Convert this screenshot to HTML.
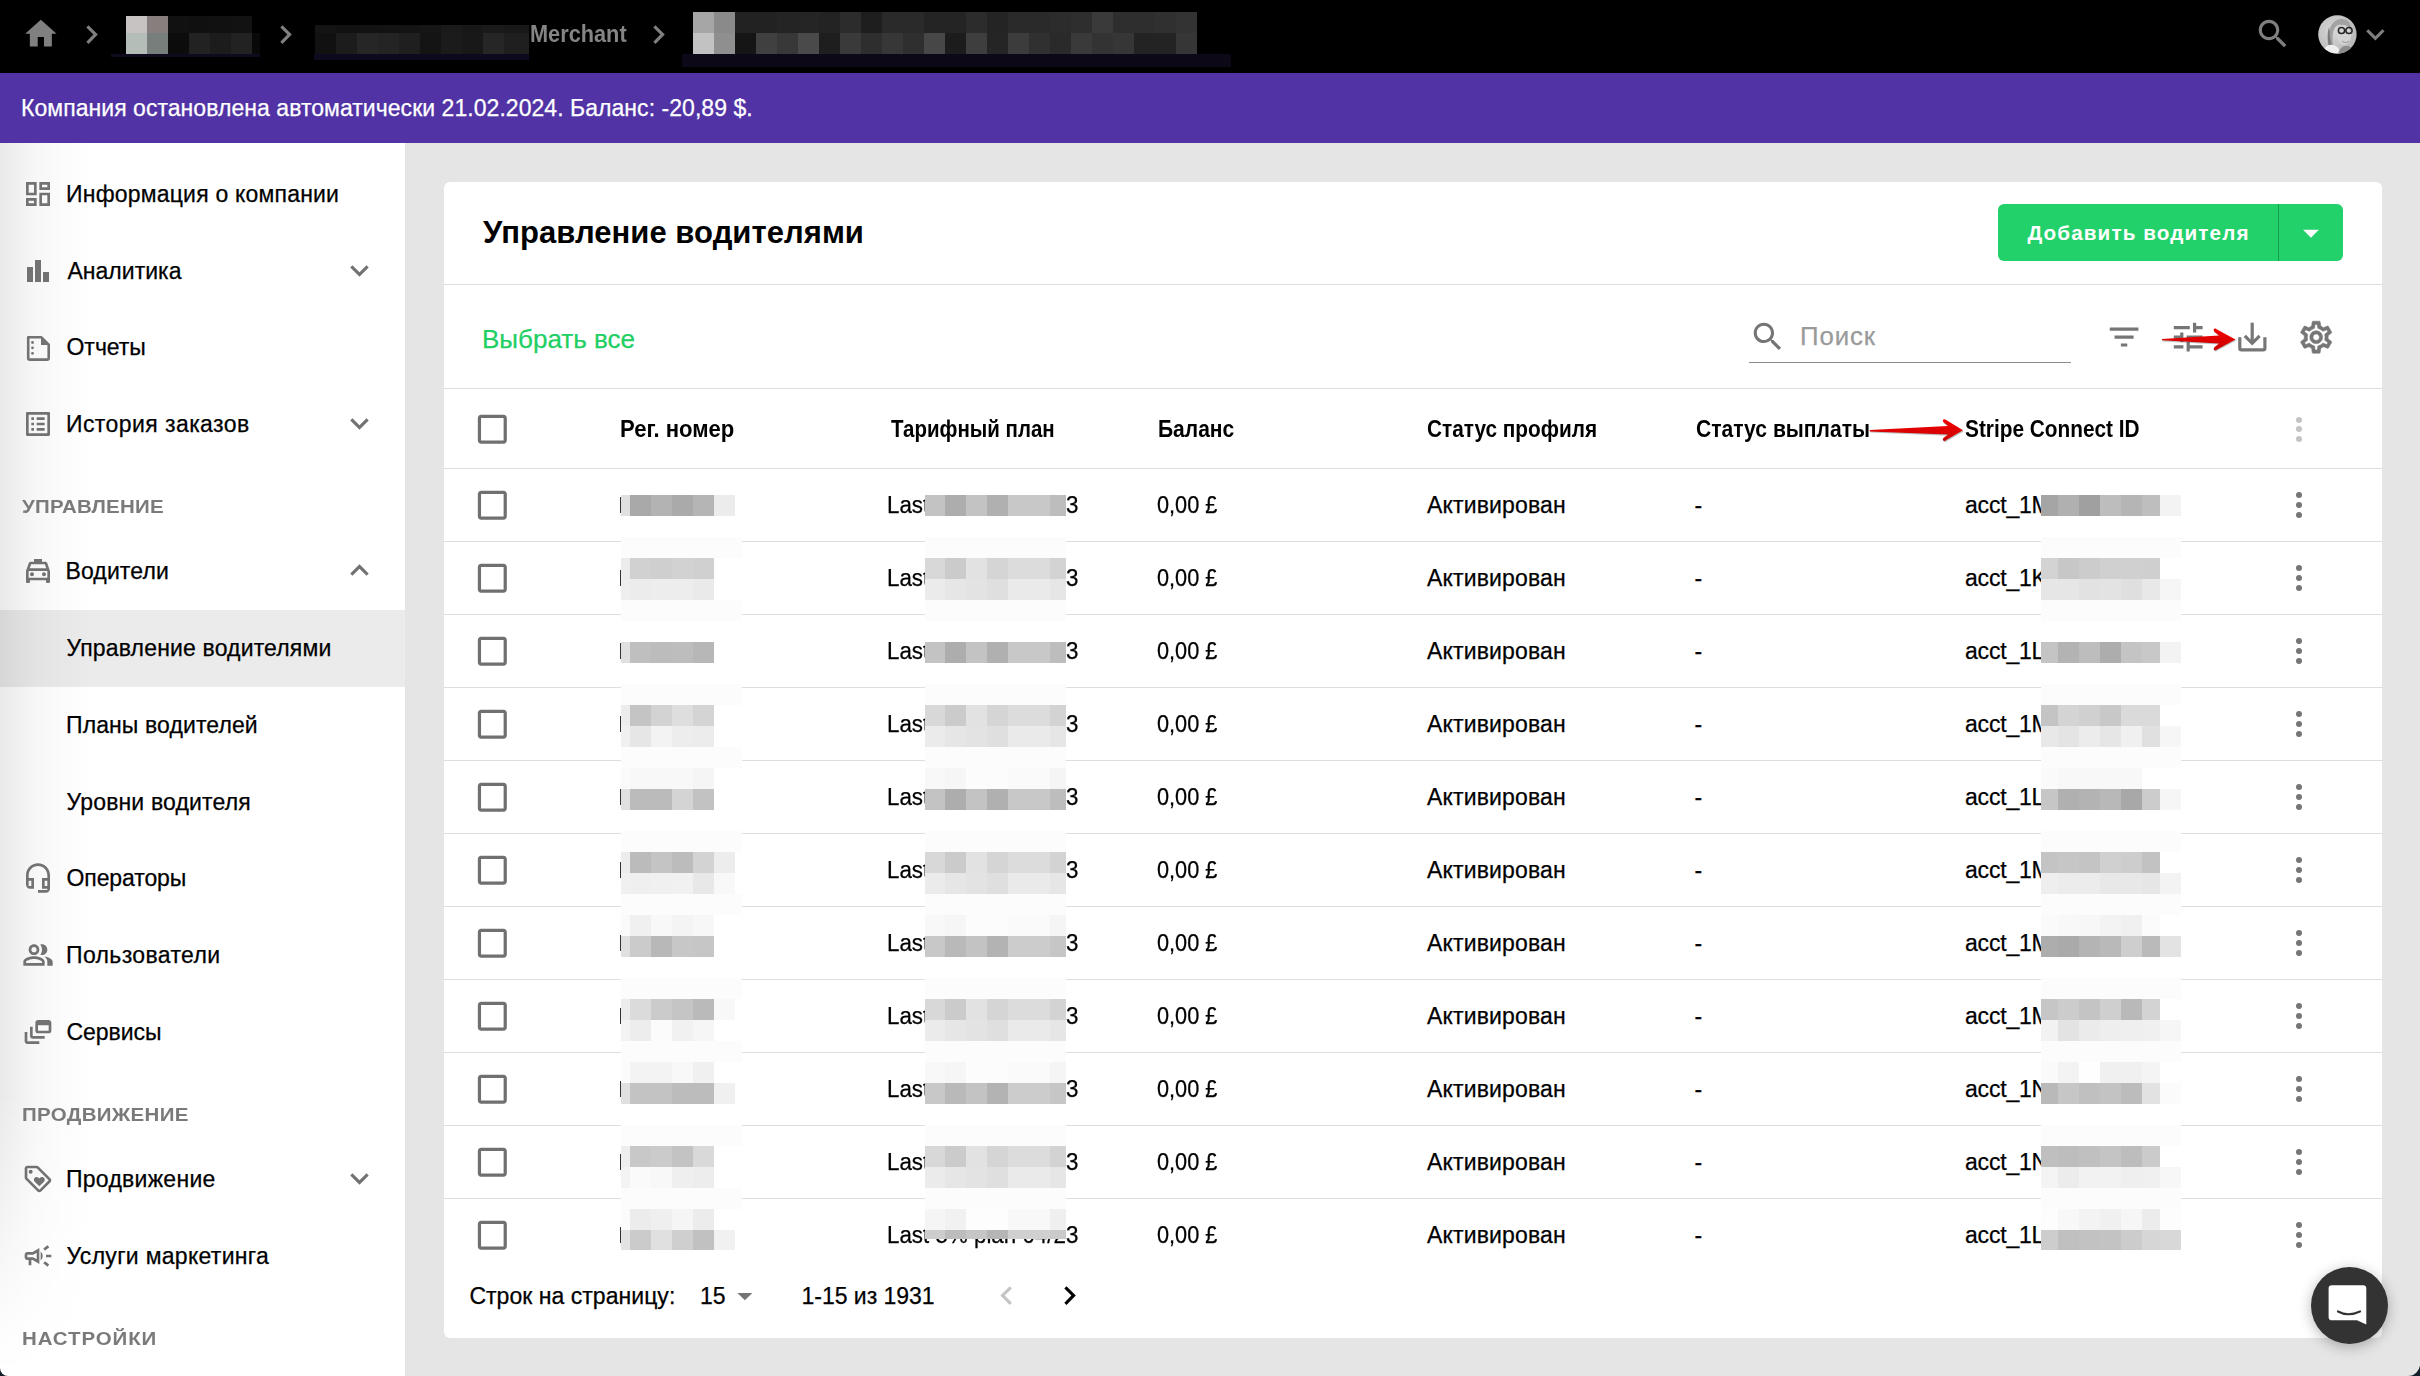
<!DOCTYPE html><html><head><meta charset="utf-8"><style>html,body{margin:0;padding:0;}body{width:2420px;height:1376px;overflow:hidden;position:relative;background:#e5e5e5;font-family:"Liberation Sans",sans-serif;}.t{position:absolute;white-space:pre;font-family:"Liberation Sans",sans-serif;}svg{display:block}</style></head><body>
<div style="position:absolute;left:0px;top:0px;width:2420px;height:73px;background:#000;"></div>
<svg style="position:absolute;left:22.3px;top:15.1px;" width="37.7" height="37.7" viewBox="0 0 24 24"><path fill="#808080" d="M10 20v-6h4v6h5v-8h3L12 3 2 12h3v8z"/></svg>
<svg style="position:absolute;left:73.4855px;top:15.5px;" width="37.2" height="37.2" viewBox="0 0 24 24"><path fill="#808080" d="M10 6L8.59 7.41 13.17 12l-4.58 4.59L10 18l6-6z"/></svg>
<svg style="position:absolute;left:267.3855px;top:15.5px;" width="37.2" height="37.2" viewBox="0 0 24 24"><path fill="#808080" d="M10 6L8.59 7.41 13.17 12l-4.58 4.59L10 18l6-6z"/></svg>
<svg style="position:absolute;left:640.4855px;top:15.5px;" width="37.2" height="37.2" viewBox="0 0 24 24"><path fill="#808080" d="M10 6L8.59 7.41 13.17 12l-4.58 4.59L10 18l6-6z"/></svg>
<div style="position:absolute;left:111px;top:54px;width:149px;height:3px;background:#0f0a1e;"></div>
<div style="position:absolute;left:126px;top:16px;width:21px;height:17px;background:#c8c3c3;"></div>
<div style="position:absolute;left:147px;top:16px;width:21px;height:17px;background:#877f7e;"></div>
<div style="position:absolute;left:168px;top:16px;width:21px;height:17px;background:#111111;"></div>
<div style="position:absolute;left:189px;top:16px;width:21px;height:17px;background:#101010;"></div>
<div style="position:absolute;left:210px;top:16px;width:21px;height:17px;background:#111111;"></div>
<div style="position:absolute;left:231px;top:16px;width:21px;height:17px;background:#121212;"></div>
<div style="position:absolute;left:126px;top:33px;width:21px;height:21px;background:#b5bdb9;"></div>
<div style="position:absolute;left:147px;top:33px;width:21px;height:21px;background:#787e7c;"></div>
<div style="position:absolute;left:168px;top:33px;width:21px;height:21px;background:#0c0c0c;"></div>
<div style="position:absolute;left:189px;top:33px;width:21px;height:21px;background:#222222;"></div>
<div style="position:absolute;left:210px;top:33px;width:21px;height:21px;background:#1c1c1c;"></div>
<div style="position:absolute;left:231px;top:33px;width:21px;height:21px;background:#222222;"></div>
<div style="position:absolute;left:252px;top:33px;width:8px;height:21px;background:#090909;"></div>
<div style="position:absolute;left:314px;top:54px;width:215px;height:6px;background:#0d0a1f;"></div>
<div style="position:absolute;left:315px;top:25px;width:21px;height:8px;background:#141414;"></div>
<div style="position:absolute;left:336px;top:25px;width:21px;height:8px;background:#111111;"></div>
<div style="position:absolute;left:357px;top:25px;width:21px;height:8px;background:#121212;"></div>
<div style="position:absolute;left:378px;top:25px;width:21px;height:8px;background:#131313;"></div>
<div style="position:absolute;left:399px;top:25px;width:21px;height:8px;background:#141414;"></div>
<div style="position:absolute;left:420px;top:25px;width:21px;height:8px;background:#161616;"></div>
<div style="position:absolute;left:441px;top:25px;width:21px;height:8px;background:#1a1a1a;"></div>
<div style="position:absolute;left:462px;top:25px;width:21px;height:8px;background:#171717;"></div>
<div style="position:absolute;left:483px;top:25px;width:21px;height:8px;background:#1a1a1a;"></div>
<div style="position:absolute;left:504px;top:25px;width:25px;height:8px;background:#181818;"></div>
<div style="position:absolute;left:315px;top:33px;width:21px;height:21px;background:#111111;"></div>
<div style="position:absolute;left:336px;top:33px;width:21px;height:21px;background:#1c1c1c;"></div>
<div style="position:absolute;left:357px;top:33px;width:21px;height:21px;background:#262626;"></div>
<div style="position:absolute;left:378px;top:33px;width:21px;height:21px;background:#242424;"></div>
<div style="position:absolute;left:399px;top:33px;width:21px;height:21px;background:#1f1f1f;"></div>
<div style="position:absolute;left:420px;top:33px;width:21px;height:21px;background:#141414;"></div>
<div style="position:absolute;left:441px;top:33px;width:21px;height:21px;background:#1b1b1b;"></div>
<div style="position:absolute;left:462px;top:33px;width:21px;height:21px;background:#181818;"></div>
<div style="position:absolute;left:483px;top:33px;width:21px;height:21px;background:#262626;"></div>
<div style="position:absolute;left:504px;top:33px;width:25px;height:21px;background:#1f1f1f;"></div>
<div class="t" style="left:530.26px;top:23.16px;font-size:23.2px;line-height:23.2px;font-weight:700;color:#858585;transform:scaleX(0.9373);transform-origin:0 0;">Merchant</div>
<div style="position:absolute;left:682px;top:54px;width:549px;height:13px;background:#0c0818;"></div>
<div style="position:absolute;left:693px;top:12px;width:21px;height:21px;background:#a6a6a6;"></div>
<div style="position:absolute;left:714px;top:12px;width:21px;height:21px;background:#8a8a8a;"></div>
<div style="position:absolute;left:735px;top:12px;width:21px;height:21px;background:#222222;"></div>
<div style="position:absolute;left:756px;top:12px;width:21px;height:21px;background:#222222;"></div>
<div style="position:absolute;left:777px;top:12px;width:21px;height:21px;background:#242424;"></div>
<div style="position:absolute;left:798px;top:12px;width:21px;height:21px;background:#252525;"></div>
<div style="position:absolute;left:819px;top:12px;width:21px;height:21px;background:#232323;"></div>
<div style="position:absolute;left:840px;top:12px;width:21px;height:21px;background:#2c2c2c;"></div>
<div style="position:absolute;left:861px;top:12px;width:21px;height:21px;background:#1e1e1e;"></div>
<div style="position:absolute;left:882px;top:12px;width:21px;height:21px;background:#2a2a2a;"></div>
<div style="position:absolute;left:903px;top:12px;width:21px;height:21px;background:#2a2a2a;"></div>
<div style="position:absolute;left:924px;top:12px;width:21px;height:21px;background:#242424;"></div>
<div style="position:absolute;left:945px;top:12px;width:21px;height:21px;background:#242424;"></div>
<div style="position:absolute;left:966px;top:12px;width:21px;height:21px;background:#2c2c2c;"></div>
<div style="position:absolute;left:987px;top:12px;width:21px;height:21px;background:#242424;"></div>
<div style="position:absolute;left:1008px;top:12px;width:21px;height:21px;background:#2a2a2a;"></div>
<div style="position:absolute;left:1029px;top:12px;width:21px;height:21px;background:#2a2a2a;"></div>
<div style="position:absolute;left:1050px;top:12px;width:21px;height:21px;background:#2c2c2c;"></div>
<div style="position:absolute;left:1071px;top:12px;width:21px;height:21px;background:#2e2e2e;"></div>
<div style="position:absolute;left:1092px;top:12px;width:21px;height:21px;background:#3a3a3a;"></div>
<div style="position:absolute;left:1113px;top:12px;width:21px;height:21px;background:#2e2e2e;"></div>
<div style="position:absolute;left:1134px;top:12px;width:21px;height:21px;background:#2e2e2e;"></div>
<div style="position:absolute;left:1155px;top:12px;width:21px;height:21px;background:#303030;"></div>
<div style="position:absolute;left:1176px;top:12px;width:21px;height:21px;background:#333333;"></div>
<div style="position:absolute;left:693px;top:33px;width:21px;height:21px;background:#c2c2c2;"></div>
<div style="position:absolute;left:714px;top:33px;width:21px;height:21px;background:#8f8f8f;"></div>
<div style="position:absolute;left:735px;top:33px;width:21px;height:21px;background:#151515;"></div>
<div style="position:absolute;left:756px;top:33px;width:21px;height:21px;background:#404040;"></div>
<div style="position:absolute;left:777px;top:33px;width:21px;height:21px;background:#383838;"></div>
<div style="position:absolute;left:798px;top:33px;width:21px;height:21px;background:#4a4a4a;"></div>
<div style="position:absolute;left:819px;top:33px;width:21px;height:21px;background:#1e1e1e;"></div>
<div style="position:absolute;left:840px;top:33px;width:21px;height:21px;background:#3a3a3a;"></div>
<div style="position:absolute;left:861px;top:33px;width:21px;height:21px;background:#2e2e2e;"></div>
<div style="position:absolute;left:882px;top:33px;width:21px;height:21px;background:#373737;"></div>
<div style="position:absolute;left:903px;top:33px;width:21px;height:21px;background:#2f2f2f;"></div>
<div style="position:absolute;left:924px;top:33px;width:21px;height:21px;background:#474747;"></div>
<div style="position:absolute;left:945px;top:33px;width:21px;height:21px;background:#1c1c1c;"></div>
<div style="position:absolute;left:966px;top:33px;width:21px;height:21px;background:#3e3e3e;"></div>
<div style="position:absolute;left:987px;top:33px;width:21px;height:21px;background:#252525;"></div>
<div style="position:absolute;left:1008px;top:33px;width:21px;height:21px;background:#3c3c3c;"></div>
<div style="position:absolute;left:1029px;top:33px;width:21px;height:21px;background:#303030;"></div>
<div style="position:absolute;left:1050px;top:33px;width:21px;height:21px;background:#2a2a2a;"></div>
<div style="position:absolute;left:1071px;top:33px;width:21px;height:21px;background:#3a3a3a;"></div>
<div style="position:absolute;left:1092px;top:33px;width:21px;height:21px;background:#333333;"></div>
<div style="position:absolute;left:1113px;top:33px;width:21px;height:21px;background:#363636;"></div>
<div style="position:absolute;left:1134px;top:33px;width:21px;height:21px;background:#232323;"></div>
<div style="position:absolute;left:1155px;top:33px;width:21px;height:21px;background:#232323;"></div>
<div style="position:absolute;left:1176px;top:33px;width:21px;height:21px;background:#363636;"></div>
<svg style="position:absolute;left:2254.2px;top:15.06px;" width="37.9" height="37.9" viewBox="0 0 24 24"><path fill="#808080" d="M15.5 14h-.79l-.28-.27C15.41 12.59 16 11.11 16 9.5 16 5.91 13.09 3 9.5 3S3 5.91 3 9.5 5.91 16 9.5 16c1.61 0 3.09-.59 4.23-1.57l.27.28v.79l5 4.99L20.49 19l-4.99-5zm-6 0C7.01 14 5 11.99 5 9.5S7.01 5 9.5 5 14 7.01 14 9.5 11.99 14 9.5 14z"/></svg>
<svg style="position:absolute;left:2318px;top:15px" width="39" height="39" viewBox="0 0 39 39"><defs><clipPath id="av"><circle cx="19.4" cy="19.4" r="19.2"/></clipPath><radialGradient id="avg" cx="0.4" cy="0.4" r="0.7"><stop offset="0" stop-color="#d8d8d8"/><stop offset="1" stop-color="#b4b4b4"/></radialGradient></defs><g clip-path="url(#av)"><rect width="39" height="39" fill="url(#avg)"/><path d="M10 30 C9 18 12 6 22 4 C30 3 34 9 33 16 C30 10 24 9 20 10 C15 12 14 20 15 30 Z" fill="#a2a2a2"/><path d="M11 12 C12 20 12 26 15 34 L13 36 C9 28 9 18 11 12 Z" fill="#7a7a7a"/><ellipse cx="26" cy="20" rx="7" ry="10" fill="#d4d4d4"/><circle cx="23.5" cy="15.5" r="3.1" fill="none" stroke="#262626" stroke-width="1.5"/><circle cx="31" cy="15.5" r="3.1" fill="none" stroke="#262626" stroke-width="1.5"/><path d="M26.6 15 H28" stroke="#262626" stroke-width="1.2"/><path d="M24 26 C26 28 29 28 31 26" stroke="#8a8a8a" stroke-width="1" fill="none"/><path d="M4 39 C6 32 10 29 15 30 C20 31 22 35 22 39 Z" fill="#eeeeee"/><path d="M20 39 C22 33 25 30 30 31 C34 32 36 36 37 39 Z" fill="#8c8c8c"/></g></svg>
<svg style="position:absolute;left:2356.7px;top:15.8px;" width="36.72" height="36.72" viewBox="0 0 24 24"><path fill="#808080" d="M16.59 8.59L12 13.17 7.41 8.59 6 10l6 6 6-6z"/></svg>
<div style="position:absolute;left:0px;top:73px;width:2420px;height:70px;background:#5133a5;"></div>
<div class="t" style="left:21.00px;top:97.23px;font-size:23.0px;line-height:23.0px;font-weight:400;color:#fff;letter-spacing:0.048px;-webkit-text-stroke:0.25px #fff;">Компания остановлена автоматически 21.02.2024. Баланс: -20,89 $.</div>
<div style="position:absolute;left:0px;top:143px;width:405px;height:1233px;background:#fff;"></div>
<div style="position:absolute;left:0px;top:610px;width:405px;height:77px;background:#ebebeb;"></div>
<div style="position:absolute;left:0;top:143px;width:90px;height:1233px;background:linear-gradient(to right,rgba(0,0,0,0.085),rgba(0,0,0,0.03) 35px,rgba(0,0,0,0) 90px);-webkit-mask-image:linear-gradient(to bottom,#000 0,#000 950px,rgba(0,0,0,0.1) 1190px,rgba(0,0,0,0) 1233px)"></div>
<div style="position:absolute;left:0;top:1368px;width:8px;height:8px;background:#13202b;clip-path:path('M0 0 A8 8 0 0 0 8 8 H0 Z')"></div>
<svg style="position:absolute;left:22px;top:178px;" width="32" height="32" viewBox="0 0 24 24"><path fill="#727272" d="M19 5v2h-4V5h4M9 5v6H5V5h4m10 8v6h-4v-6h4M9 17v2H5v-2h4M21 3h-8v6h8V3zM11 3H3v10h8V3zm10 8h-8v10h8V11zm-10 4H3v6h8v-6z"/></svg>
<div style="position:absolute;left:27.2px;top:267.2px;width:5.5px;height:14.5px;background:#727272;"></div>
<div style="position:absolute;left:35.2px;top:260.2px;width:5.5px;height:21.5px;background:#727272;"></div>
<div style="position:absolute;left:43.1px;top:272.2px;width:5.5px;height:9.5px;background:#727272;"></div>
<svg style="position:absolute;left:18px;top:327px;" width="40" height="40" viewBox="0 0 40 40"><path fill="none" stroke="#727272" stroke-width="2.6" stroke-linejoin="round" d="M10.2 10.3 H23.4 L30.7 17.6 V31 q0 1.6-1.6 1.6 H11.8 q-1.6 0-1.6-1.6 Z"/><path fill="#727272" d="M23 9.2 L31.9 18.1 H23 Z"/><circle cx="14.5" cy="15.5" r="1.4" fill="#727272"/><circle cx="14.5" cy="20.8" r="1.4" fill="#727272"/><circle cx="14.5" cy="26.3" r="1.4" fill="#727272"/></svg>
<svg style="position:absolute;left:22px;top:408px;" width="32" height="32" viewBox="0 0 24 24"><path fill="#727272" d="M19 5v14H5V5h14m1.1-2H3.9c-.5 0-.9.4-.9.9v16.2c0 .4.4.9.9.9h16.2c.4 0 .9-.5.9-.9V3.9c0-.5-.5-.9-.9-.9zM11 7h6v2h-6V7zm0 4h6v2h-6v-2zm0 4h6v2h-6zM7 7h2v2H7zm0 4h2v2H7zm0 4h2v2H7z"/></svg>
<svg style="position:absolute;left:22px;top:555px;" width="32" height="32" viewBox="0 0 24 24"><path fill="#727272" d="M18.92 6.01C18.72 5.42 18.16 5 17.5 5H15V3H9v2H6.5c-.66 0-1.21.42-1.42 1.01L3 12v8c0 .55.45 1 1 1h1c.55 0 1-.45 1-1v-1h12v1c0 .55.45 1 1 1h1c.55 0 1-.45 1-1v-8l-2.08-5.99zM6.85 7h10.29l1.04 3H5.81l1.04-3zM19 17H5v-5h14v5zM7.5 13a1.5 1.5 0 1 0 0 3 1.5 1.5 0 1 0 0-3zM16.5 13a1.5 1.5 0 1 0 0 3 1.5 1.5 0 1 0 0-3z"/></svg>
<svg style="position:absolute;left:22px;top:862px;" width="32" height="32" viewBox="0 0 24 24"><path fill="#727272" d="M19 14v4h-2v-4h2M7 14v4H5v-4h2m5-13c-4.97 0-9 4.03-9 9v7c0 1.66 1.34 3 3 3h3v-8H5v-2c0-3.87 3.13-7 7-7s7 3.13 7 7v2h-4v8h4v1h-7v2h6c1.66 0 3-1.34 3-3V10c0-4.97-4.03-9-9-9z"/></svg>
<svg style="position:absolute;left:22px;top:939px;" width="32" height="32" viewBox="0 0 24 24"><path fill="#727272" d="M16.67 13.13C18.04 14.06 19 15.32 19 17v3h4v-3c0-2.18-3.57-3.47-6.33-3.87zM15 12c2.21 0 4-1.79 4-4s-1.79-4-4-4c-.47 0-.91.1-1.33.24C14.5 5.27 15 6.58 15 8s-.5 2.73-1.33 3.76c.42.14.86.24 1.33.24zM9 12c2.21 0 4-1.79 4-4s-1.79-4-4-4-4 1.79-4 4 1.79 4 4 4zm0-6c1.1 0 2 .9 2 2s-.9 2-2 2-2-.9-2-2 .9-2 2-2zM9 13c-2.67 0-8 1.34-8 4v3h16v-3c0-2.66-5.33-4-8-4zm6 5H3v-.99C3.2 16.29 6.3 15 9 15s5.8 1.29 6 2v1z"/></svg>
<svg style="position:absolute;left:22px;top:1016px;" width="32" height="32" viewBox="0 0 24 24"><path fill="#727272" d="M8 8H6v7c0 1.1.9 2 2 2h9v-2H8V8zM20 3h-8c-1.1 0-2 .9-2 2v6c0 1.1.9 2 2 2h8c1.1 0 2-.9 2-2V5c0-1.1-.9-2-2-2zm0 8h-8V7h8v4zM4 12H2v7c0 1.1.9 2 2 2h9v-2H4v-7z"/></svg>
<svg style="position:absolute;left:22px;top:1163px;" width="32" height="32" viewBox="0 0 24 24"><path fill="#727272" d="M21.41 11.58l-9-9C12.05 2.22 11.55 2 11 2H4c-1.1 0-2 .9-2 2v7c0 .55.22 1.05.59 1.42l9 9c.36.36.86.58 1.41.58s1.05-.22 1.41-.59l7-7c.37-.36.59-.86.59-1.41s-.23-1.06-.59-1.42zM13 20.01L4 11V4h7v-.01l9 9-7 7.02zM6.5 5a1.5 1.5 0 1 0 0 3 1.5 1.5 0 1 0 0-3zM8.9 12.55c0 .57.23 1.07.6 1.45l3.5 3.5 3.5-3.5c.37-.37.6-.89.6-1.45 0-1.13-.92-2.05-2.05-2.05-.57 0-1.08.23-1.45.6l-.6.6-.6-.59c-.37-.38-.89-.61-1.45-.61-1.13 0-2.05.92-2.05 2.05z"/></svg>
<svg style="position:absolute;left:22px;top:1240px;" width="32" height="32" viewBox="0 0 24 24"><path fill="#727272" d="M18 11v2h4v-2h-4zm-2 6.61c.96.71 2.21 1.65 3.2 2.39.4-.53.8-1.07 1.2-1.6-.99-.74-2.24-1.68-3.2-2.4-.4.54-.8 1.08-1.2 1.61zM20.4 5.6c-.4-.53-.8-1.07-1.2-1.6-.99.74-2.24 1.68-3.2 2.4.4.53.8 1.07 1.2 1.6.96-.72 2.21-1.65 3.2-2.4zM4 9c-1.1 0-2 .9-2 2v2c0 1.1.9 2 2 2h1v4h2v-4h1l5 3V6L8 9H4zm5.03 1.71L11 9.53v4.94l-1.97-1.18-.48-.29H4v-2h4.55l.48-.29zM15.5 12c0-1.33-.58-2.53-1.5-3.35v6.69c.92-.81 1.5-2.01 1.5-3.34z"/></svg>
<svg style="position:absolute;left:341.46px;top:252.37140000000002px;" width="36.96" height="36.96" viewBox="0 0 24 24"><path fill="#727272" d="M16.59 8.59L12 13.17 7.41 8.59 6 10l6 6 6-6z"/></svg>
<svg style="position:absolute;left:341.46px;top:405.3714px;" width="36.96" height="36.96" viewBox="0 0 24 24"><path fill="#727272" d="M16.59 8.59L12 13.17 7.41 8.59 6 10l6 6 6-6z"/></svg>
<svg style="position:absolute;left:341.46px;top:1160.3714px;" width="36.96" height="36.96" viewBox="0 0 24 24"><path fill="#727272" d="M16.59 8.59L12 13.17 7.41 8.59 6 10l6 6 6-6z"/></svg>
<svg style="position:absolute;left:341.46px;top:551.68px;" width="36.96" height="36.96" viewBox="0 0 24 24"><path fill="#727272" d="M12 8l-6 6 1.41 1.41L12 10.83l4.59 4.58L18 14z"/></svg>
<div class="t" style="left:66.00px;top:183.23px;font-size:23.0px;line-height:23.0px;font-weight:400;color:#000;letter-spacing:0.2px;-webkit-text-stroke:0.25px #000;">Информация о компании</div>
<div class="t" style="left:67.50px;top:260.23px;font-size:23.0px;line-height:23.0px;font-weight:400;color:#000;letter-spacing:0.012px;-webkit-text-stroke:0.25px #000;">Аналитика</div>
<div class="t" style="left:66.50px;top:336.23px;font-size:23.0px;line-height:23.0px;font-weight:400;color:#000;letter-spacing:-0.02px;-webkit-text-stroke:0.25px #000;">Отчеты</div>
<div class="t" style="left:66.00px;top:413.23px;font-size:23.0px;line-height:23.0px;font-weight:400;color:#000;letter-spacing:0.421px;-webkit-text-stroke:0.25px #000;">История заказов</div>
<div class="t" style="left:65.50px;top:560.23px;font-size:23.0px;line-height:23.0px;font-weight:400;color:#000;letter-spacing:0.114px;-webkit-text-stroke:0.25px #000;">Водители</div>
<div class="t" style="left:66.50px;top:637.23px;font-size:23.0px;line-height:23.0px;font-weight:400;color:#000;letter-spacing:0.16px;-webkit-text-stroke:0.25px #000;">Управление водителями</div>
<div class="t" style="left:66.00px;top:714.23px;font-size:23.0px;line-height:23.0px;font-weight:400;color:#000;letter-spacing:0.1px;-webkit-text-stroke:0.25px #000;">Планы водителей</div>
<div class="t" style="left:66.50px;top:791.23px;font-size:23.0px;line-height:23.0px;font-weight:400;color:#000;letter-spacing:0.157px;-webkit-text-stroke:0.25px #000;">Уровни водителя</div>
<div class="t" style="left:66.50px;top:867.23px;font-size:23.0px;line-height:23.0px;font-weight:400;color:#000;letter-spacing:-0.1px;-webkit-text-stroke:0.25px #000;">Операторы</div>
<div class="t" style="left:66.00px;top:944.23px;font-size:23.0px;line-height:23.0px;font-weight:400;color:#000;letter-spacing:0.364px;-webkit-text-stroke:0.25px #000;">Пользователи</div>
<div class="t" style="left:66.50px;top:1021.23px;font-size:23.0px;line-height:23.0px;font-weight:400;color:#000;letter-spacing:-0.033px;-webkit-text-stroke:0.25px #000;">Сервисы</div>
<div class="t" style="left:66.00px;top:1168.23px;font-size:23.0px;line-height:23.0px;font-weight:400;color:#000;letter-spacing:0.27px;-webkit-text-stroke:0.25px #000;">Продвижение</div>
<div class="t" style="left:66.50px;top:1245.23px;font-size:23.0px;line-height:23.0px;font-weight:400;color:#000;letter-spacing:0.288px;-webkit-text-stroke:0.25px #000;">Услуги маркетинга</div>
<div class="t" style="left:21.60px;top:498.53px;font-size:17.8px;line-height:17.8px;font-weight:700;color:#7a7a7a;letter-spacing:0.208px;transform:scaleX(1.15);transform-origin:0 0;">УПРАВЛЕНИЕ</div>
<div class="t" style="left:21.55px;top:1106.53px;font-size:17.8px;line-height:17.8px;font-weight:700;color:#7a7a7a;letter-spacing:0.296px;transform:scaleX(1.15);transform-origin:0 0;">ПРОДВИЖЕНИЕ</div>
<div class="t" style="left:21.55px;top:1330.63px;font-size:17.8px;line-height:17.8px;font-weight:700;color:#7a7a7a;letter-spacing:0.793px;transform:scaleX(1.15);transform-origin:0 0;">НАСТРОЙКИ</div>
<div style="position:absolute;left:444px;top:182px;width:1938px;height:1156px;background:#fff;border-radius:6px"></div>
<div class="t" style="left:483.00px;top:217.46px;font-size:31px;line-height:31px;font-weight:700;color:#000;letter-spacing:0.05px;">Управление водителями</div>
<div style="position:absolute;left:1998px;top:204px;width:345px;height:57px;background:#23d16a;border-radius:6px"></div>
<div style="position:absolute;left:2277.5px;top:204px;width:1.2px;height:57px;background:#179c4c;"></div>
<div class="t" style="left:2027.50px;top:223.18px;font-size:20.7px;line-height:20.7px;font-weight:700;color:#fff;letter-spacing:1.094px;">Добавить водителя</div>
<svg style="position:absolute;left:2292.34px;top:213.89999999999998px;" width="37.92" height="37.92" viewBox="0 0 24 24"><path fill="#fff" d="M7 10l5 5 5-5z"/></svg>
<div style="position:absolute;left:444px;top:284px;width:1938px;height:1px;background:#dedede;"></div>
<div class="t" style="left:482.00px;top:325.69px;font-size:26px;line-height:26px;font-weight:400;color:#21cf63;letter-spacing:0.0px;-webkit-text-stroke:0.25px #21cf63;">Выбрать все</div>
<svg style="position:absolute;left:1749.3px;top:317.8px;" width="37.608" height="37.608" viewBox="0 0 24 24"><path fill="#757575" d="M15.5 14h-.79l-.28-.27C15.41 12.59 16 11.11 16 9.5 16 5.91 13.09 3 9.5 3S3 5.91 3 9.5 5.91 16 9.5 16c1.61 0 3.09-.59 4.23-1.57l.27.28v.79l5 4.99L20.49 19l-4.99-5zm-6 0C7.01 14 5 11.99 5 9.5S7.01 5 9.5 5 14 7.01 14 9.5 11.99 14 9.5 14z"/></svg>
<div class="t" style="left:1800.00px;top:324.46px;font-size:25.8px;line-height:25.8px;font-weight:400;color:#9a9a9a;letter-spacing:0.875px;-webkit-text-stroke:0.25px #9a9a9a;">Поиск</div>
<div style="position:absolute;left:1749px;top:361.5px;width:322px;height:1.6px;background:#8a8a8a;"></div>
<svg style="position:absolute;left:2105.23px;top:317.76px;" width="38.160000000000004" height="38.160000000000004" viewBox="0 0 24 24"><path fill="#767676" d="M10 18h4v-2h-4v2zM3 6v2h18V6H3zm3 7h12v-2H6v2z"/></svg>
<svg style="position:absolute;left:2169.2px;top:317.9px;" width="38.400000000000006" height="38.400000000000006" viewBox="0 0 24 24"><path fill="#767676" d="M3 17v2h6v-2H3zM3 5v2h10V5H3zm10 16v-2h8v-2h-8v-2h-2v6h2zM7 9v2H3v2h4v2h2V9H7zm14 4v-2H11v2h10zm-6-4h2V7h4V5h-4V3h-2v6z"/></svg>
<svg style="position:absolute;left:2230px;top:315px;" width="45" height="45" viewBox="2230 315 45 45"><g fill="none" stroke="#767676" stroke-width="3.2"><path d="M2239.8 337.2 V348.2 q0 1.6 1.6 1.6 H2263.3 q1.6 0 1.6 -1.6 V337.2"/><path d="M2252.2 322.7 V342"/><path d="M2244.8 335.9 L2252.2 343.3 L2259.6 335.9"/></g></svg>
<svg style="position:absolute;left:2297px;top:317.9px;" width="38.4" height="38.4" viewBox="0 0 24 24"><path fill="#767676" stroke="#767676" stroke-width="0.35" d="M19.43 12.98c.04-.32.07-.64.07-.98 0-.34-.03-.66-.07-.98l2.11-1.65c.19-.15.24-.42.12-.64l-2-3.46c-.09-.16-.26-.25-.44-.25-.06 0-.12.01-.17.03l-2.49 1c-.52-.4-1.08-.73-1.69-.98l-.38-2.65C14.46 2.18 14.25 2 14 2h-4c-.25 0-.46.18-.49.42l-.38 2.65c-.61.25-1.17.59-1.69.98l-2.49-1c-.06-.02-.12-.03-.18-.03-.17 0-.34.09-.43.25l-2 3.46c-.13.22-.07.49.12.64l2.11 1.65c-.04.32-.07.65-.07.98 0 .33.03.66.07.98l-2.11 1.65c-.19.15-.24.42-.12.64l2 3.46c.09.16.26.25.44.25.06 0 .12-.01.17-.03l2.49-1c.52.4 1.08.73 1.69.98l.38 2.65c.03.24.24.42.49.42h4c.25 0 .46-.18.49-.42l.38-2.65c.61-.25 1.17-.59 1.69-.98l2.49 1c.06.02.12.03.18.03.17 0 .34-.09.43-.25l2-3.46c.12-.22.07-.49-.12-.64l-2.11-1.65zm-1.98-1.71c.04.31.05.52.05.73 0 .21-.02.43-.05.73l-.14 1.13.89.7 1.08.84-.7 1.21-1.27-.51-1.04-.42-.9.68c-.43.32-.84.56-1.25.73l-1.06.43-.16 1.13-.2 1.35h-1.4l-.19-1.35-.16-1.13-1.06-.43c-.43-.18-.83-.41-1.23-.71l-.91-.7-1.06.43-1.27.51-.7-1.21 1.08-.84.89-.7-.14-1.13c-.03-.31-.05-.54-.05-.74s.02-.43.05-.73l.14-1.13-.89-.7-1.08-.84.7-1.21 1.27.51 1.04.42.9-.68c.43-.32.84-.56 1.25-.73l1.06-.43.16-1.13.2-1.35h1.39l.19 1.35.16 1.13 1.06.43c.43.18.83.41 1.23.71l.91.7 1.06-.43 1.27-.51.7 1.21-1.07.85-.89.7.14 1.13zM12 8c-2.21 0-4 1.79-4 4s1.79 4 4 4 4-1.79 4-4-1.79-4-4-4zm0 6c-1.1 0-2-.9-2-2s.9-2 2-2 2 .9 2 2-.9 2-2 2z"/></svg>
<div style="position:absolute;left:444px;top:388px;width:1938px;height:1px;background:#dedede;"></div>
<svg style="position:absolute;left:472.967px;top:409.967px;" width="38.664" height="38.664" viewBox="0 0 24 24"><path fill="#707070" d="M19 5v14H5V5h14m0-2H5c-1.11 0-2 .9-2 2v14c0 1.1.89 2 2 2h14c1.1 0 2-.9 2-2V5c0-1.1-.9-2-2-2z"/></svg>
<div class="t" style="left:619.75px;top:418.06px;font-size:23.2px;line-height:23.2px;font-weight:700;color:#000;transform:scaleX(0.9517);transform-origin:0 0;">Рег. номер</div>
<div class="t" style="left:890.50px;top:418.06px;font-size:23.2px;line-height:23.2px;font-weight:700;color:#000;transform:scaleX(0.8832);transform-origin:0 0;">Тарифный план</div>
<div class="t" style="left:1158.09px;top:418.06px;font-size:23.2px;line-height:23.2px;font-weight:700;color:#000;transform:scaleX(0.9061);transform-origin:0 0;">Баланс</div>
<div class="t" style="left:1427.10px;top:418.06px;font-size:23.2px;line-height:23.2px;font-weight:700;color:#000;transform:scaleX(0.8963);transform-origin:0 0;">Статус профиля</div>
<div class="t" style="left:1696.29px;top:418.06px;font-size:23.2px;line-height:23.2px;font-weight:700;color:#000;transform:scaleX(0.9090);transform-origin:0 0;">Статус выплаты</div>
<div class="t" style="left:1965.40px;top:418.06px;font-size:23.2px;line-height:23.2px;font-weight:700;color:#000;transform:scaleX(0.8974);transform-origin:0 0;">Stripe Connect ID</div>
<div style="position:absolute;left:2296px;top:416.5px;width:6px;height:6px;border-radius:3px;background:#c4c4c4"></div>
<div style="position:absolute;left:2296px;top:426.2px;width:6px;height:6px;border-radius:3px;background:#c4c4c4"></div>
<div style="position:absolute;left:2296px;top:435.8px;width:6px;height:6px;border-radius:3px;background:#c4c4c4"></div>
<div style="position:absolute;left:444px;top:468px;width:1938px;height:1px;background:#dedede;"></div>
<div style="position:absolute;left:444px;top:541px;width:1938px;height:1px;background:#dedede;"></div>
<div style="position:absolute;left:444px;top:614px;width:1938px;height:1px;background:#dedede;"></div>
<div style="position:absolute;left:444px;top:687px;width:1938px;height:1px;background:#dedede;"></div>
<div style="position:absolute;left:444px;top:760px;width:1938px;height:1px;background:#dedede;"></div>
<div style="position:absolute;left:444px;top:833px;width:1938px;height:1px;background:#dedede;"></div>
<div style="position:absolute;left:444px;top:906px;width:1938px;height:1px;background:#dedede;"></div>
<div style="position:absolute;left:444px;top:979px;width:1938px;height:1px;background:#dedede;"></div>
<div style="position:absolute;left:444px;top:1052px;width:1938px;height:1px;background:#dedede;"></div>
<div style="position:absolute;left:444px;top:1125px;width:1938px;height:1px;background:#dedede;"></div>
<div style="position:absolute;left:444px;top:1198px;width:1938px;height:1px;background:#dedede;"></div>
<svg style="position:absolute;left:472.967px;top:485.86699999999996px;" width="38.664" height="38.664" viewBox="0 0 24 24"><path fill="#707070" d="M19 5v14H5V5h14m0-2H5c-1.11 0-2 .9-2 2v14c0 1.1.89 2 2 2h14c1.1 0 2-.9 2-2V5c0-1.1-.9-2-2-2z"/></svg>
<div style="position:absolute;left:619.5px;top:497px;width:1.8px;height:16px;background:#333;"></div>
<div class="t" style="left:887.06px;top:494.23px;font-size:23.0px;line-height:23.0px;font-weight:400;color:#000;transform:scaleX(0.9716);transform-origin:0 0;-webkit-text-stroke:0.25px #000;">Last 5% plan 04/23</div>
<div class="t" style="left:1157.06px;top:494.23px;font-size:23.0px;line-height:23.0px;font-weight:400;color:#000;transform:scaleX(0.9444);transform-origin:0 0;-webkit-text-stroke:0.25px #000;">0,00 £</div>
<div class="t" style="left:1427.00px;top:494.23px;font-size:23.0px;line-height:23.0px;font-weight:400;color:#000;letter-spacing:0.15px;-webkit-text-stroke:0.25px #000;">Активирован</div>
<div class="t" style="left:1694.40px;top:494.23px;font-size:23.0px;line-height:23.0px;font-weight:400;color:#000;letter-spacing:0px;-webkit-text-stroke:0.25px #000;">-</div>
<div class="t" style="left:1965.00px;top:494.23px;font-size:23.0px;line-height:23.0px;font-weight:400;color:#000;letter-spacing:-0.2px;-webkit-text-stroke:0.25px #000;">acct_1M</div>
<div style="position:absolute;left:2296.2px;top:492.3px;width:6px;height:6px;border-radius:3px;background:#757575"></div>
<div style="position:absolute;left:2296.2px;top:502.0px;width:6px;height:6px;border-radius:3px;background:#757575"></div>
<div style="position:absolute;left:2296.2px;top:511.5px;width:6px;height:6px;border-radius:3px;background:#757575"></div>
<svg style="position:absolute;left:472.967px;top:558.8670000000001px;" width="38.664" height="38.664" viewBox="0 0 24 24"><path fill="#707070" d="M19 5v14H5V5h14m0-2H5c-1.11 0-2 .9-2 2v14c0 1.1.89 2 2 2h14c1.1 0 2-.9 2-2V5c0-1.1-.9-2-2-2z"/></svg>
<div style="position:absolute;left:619.5px;top:570px;width:1.8px;height:16px;background:#333;"></div>
<div class="t" style="left:887.06px;top:567.23px;font-size:23.0px;line-height:23.0px;font-weight:400;color:#000;transform:scaleX(0.9716);transform-origin:0 0;-webkit-text-stroke:0.25px #000;">Last 5% plan 04/23</div>
<div class="t" style="left:1157.06px;top:567.23px;font-size:23.0px;line-height:23.0px;font-weight:400;color:#000;transform:scaleX(0.9444);transform-origin:0 0;-webkit-text-stroke:0.25px #000;">0,00 £</div>
<div class="t" style="left:1427.00px;top:567.23px;font-size:23.0px;line-height:23.0px;font-weight:400;color:#000;letter-spacing:0.15px;-webkit-text-stroke:0.25px #000;">Активирован</div>
<div class="t" style="left:1694.40px;top:567.23px;font-size:23.0px;line-height:23.0px;font-weight:400;color:#000;letter-spacing:0px;-webkit-text-stroke:0.25px #000;">-</div>
<div class="t" style="left:1965.00px;top:567.23px;font-size:23.0px;line-height:23.0px;font-weight:400;color:#000;letter-spacing:-0.2px;-webkit-text-stroke:0.25px #000;">acct_1K</div>
<div style="position:absolute;left:2296.2px;top:565.3px;width:6px;height:6px;border-radius:3px;background:#757575"></div>
<div style="position:absolute;left:2296.2px;top:575.0px;width:6px;height:6px;border-radius:3px;background:#757575"></div>
<div style="position:absolute;left:2296.2px;top:584.5px;width:6px;height:6px;border-radius:3px;background:#757575"></div>
<svg style="position:absolute;left:472.967px;top:631.8670000000001px;" width="38.664" height="38.664" viewBox="0 0 24 24"><path fill="#707070" d="M19 5v14H5V5h14m0-2H5c-1.11 0-2 .9-2 2v14c0 1.1.89 2 2 2h14c1.1 0 2-.9 2-2V5c0-1.1-.9-2-2-2z"/></svg>
<div style="position:absolute;left:619.5px;top:643px;width:1.8px;height:16px;background:#333;"></div>
<div class="t" style="left:887.06px;top:640.23px;font-size:23.0px;line-height:23.0px;font-weight:400;color:#000;transform:scaleX(0.9716);transform-origin:0 0;-webkit-text-stroke:0.25px #000;">Last 5% plan 04/23</div>
<div class="t" style="left:1157.06px;top:640.23px;font-size:23.0px;line-height:23.0px;font-weight:400;color:#000;transform:scaleX(0.9444);transform-origin:0 0;-webkit-text-stroke:0.25px #000;">0,00 £</div>
<div class="t" style="left:1427.00px;top:640.23px;font-size:23.0px;line-height:23.0px;font-weight:400;color:#000;letter-spacing:0.15px;-webkit-text-stroke:0.25px #000;">Активирован</div>
<div class="t" style="left:1694.40px;top:640.23px;font-size:23.0px;line-height:23.0px;font-weight:400;color:#000;letter-spacing:0px;-webkit-text-stroke:0.25px #000;">-</div>
<div class="t" style="left:1965.00px;top:640.23px;font-size:23.0px;line-height:23.0px;font-weight:400;color:#000;letter-spacing:-0.2px;-webkit-text-stroke:0.25px #000;">acct_1L</div>
<div style="position:absolute;left:2296.2px;top:638.3px;width:6px;height:6px;border-radius:3px;background:#757575"></div>
<div style="position:absolute;left:2296.2px;top:648.0px;width:6px;height:6px;border-radius:3px;background:#757575"></div>
<div style="position:absolute;left:2296.2px;top:657.5px;width:6px;height:6px;border-radius:3px;background:#757575"></div>
<svg style="position:absolute;left:472.967px;top:704.8670000000001px;" width="38.664" height="38.664" viewBox="0 0 24 24"><path fill="#707070" d="M19 5v14H5V5h14m0-2H5c-1.11 0-2 .9-2 2v14c0 1.1.89 2 2 2h14c1.1 0 2-.9 2-2V5c0-1.1-.9-2-2-2z"/></svg>
<div style="position:absolute;left:619.5px;top:716px;width:1.8px;height:16px;background:#333;"></div>
<div class="t" style="left:887.06px;top:713.23px;font-size:23.0px;line-height:23.0px;font-weight:400;color:#000;transform:scaleX(0.9716);transform-origin:0 0;-webkit-text-stroke:0.25px #000;">Last 5% plan 04/23</div>
<div class="t" style="left:1157.06px;top:713.23px;font-size:23.0px;line-height:23.0px;font-weight:400;color:#000;transform:scaleX(0.9444);transform-origin:0 0;-webkit-text-stroke:0.25px #000;">0,00 £</div>
<div class="t" style="left:1427.00px;top:713.23px;font-size:23.0px;line-height:23.0px;font-weight:400;color:#000;letter-spacing:0.15px;-webkit-text-stroke:0.25px #000;">Активирован</div>
<div class="t" style="left:1694.40px;top:713.23px;font-size:23.0px;line-height:23.0px;font-weight:400;color:#000;letter-spacing:0px;-webkit-text-stroke:0.25px #000;">-</div>
<div class="t" style="left:1965.00px;top:713.23px;font-size:23.0px;line-height:23.0px;font-weight:400;color:#000;letter-spacing:-0.2px;-webkit-text-stroke:0.25px #000;">acct_1M</div>
<div style="position:absolute;left:2296.2px;top:711.3px;width:6px;height:6px;border-radius:3px;background:#757575"></div>
<div style="position:absolute;left:2296.2px;top:721.0px;width:6px;height:6px;border-radius:3px;background:#757575"></div>
<div style="position:absolute;left:2296.2px;top:730.5px;width:6px;height:6px;border-radius:3px;background:#757575"></div>
<svg style="position:absolute;left:472.967px;top:777.8670000000001px;" width="38.664" height="38.664" viewBox="0 0 24 24"><path fill="#707070" d="M19 5v14H5V5h14m0-2H5c-1.11 0-2 .9-2 2v14c0 1.1.89 2 2 2h14c1.1 0 2-.9 2-2V5c0-1.1-.9-2-2-2z"/></svg>
<div style="position:absolute;left:619.5px;top:789px;width:1.8px;height:16px;background:#333;"></div>
<div class="t" style="left:887.06px;top:786.23px;font-size:23.0px;line-height:23.0px;font-weight:400;color:#000;transform:scaleX(0.9716);transform-origin:0 0;-webkit-text-stroke:0.25px #000;">Last 5% plan 04/23</div>
<div class="t" style="left:1157.06px;top:786.23px;font-size:23.0px;line-height:23.0px;font-weight:400;color:#000;transform:scaleX(0.9444);transform-origin:0 0;-webkit-text-stroke:0.25px #000;">0,00 £</div>
<div class="t" style="left:1427.00px;top:786.23px;font-size:23.0px;line-height:23.0px;font-weight:400;color:#000;letter-spacing:0.15px;-webkit-text-stroke:0.25px #000;">Активирован</div>
<div class="t" style="left:1694.40px;top:786.23px;font-size:23.0px;line-height:23.0px;font-weight:400;color:#000;letter-spacing:0px;-webkit-text-stroke:0.25px #000;">-</div>
<div class="t" style="left:1965.00px;top:786.23px;font-size:23.0px;line-height:23.0px;font-weight:400;color:#000;letter-spacing:-0.2px;-webkit-text-stroke:0.25px #000;">acct_1L</div>
<div style="position:absolute;left:2296.2px;top:784.3px;width:6px;height:6px;border-radius:3px;background:#757575"></div>
<div style="position:absolute;left:2296.2px;top:794.0px;width:6px;height:6px;border-radius:3px;background:#757575"></div>
<div style="position:absolute;left:2296.2px;top:803.5px;width:6px;height:6px;border-radius:3px;background:#757575"></div>
<svg style="position:absolute;left:472.967px;top:850.8670000000001px;" width="38.664" height="38.664" viewBox="0 0 24 24"><path fill="#707070" d="M19 5v14H5V5h14m0-2H5c-1.11 0-2 .9-2 2v14c0 1.1.89 2 2 2h14c1.1 0 2-.9 2-2V5c0-1.1-.9-2-2-2z"/></svg>
<div style="position:absolute;left:619.5px;top:862px;width:1.8px;height:16px;background:#333;"></div>
<div class="t" style="left:887.06px;top:859.23px;font-size:23.0px;line-height:23.0px;font-weight:400;color:#000;transform:scaleX(0.9716);transform-origin:0 0;-webkit-text-stroke:0.25px #000;">Last 5% plan 04/23</div>
<div class="t" style="left:1157.06px;top:859.23px;font-size:23.0px;line-height:23.0px;font-weight:400;color:#000;transform:scaleX(0.9444);transform-origin:0 0;-webkit-text-stroke:0.25px #000;">0,00 £</div>
<div class="t" style="left:1427.00px;top:859.23px;font-size:23.0px;line-height:23.0px;font-weight:400;color:#000;letter-spacing:0.15px;-webkit-text-stroke:0.25px #000;">Активирован</div>
<div class="t" style="left:1694.40px;top:859.23px;font-size:23.0px;line-height:23.0px;font-weight:400;color:#000;letter-spacing:0px;-webkit-text-stroke:0.25px #000;">-</div>
<div class="t" style="left:1965.00px;top:859.23px;font-size:23.0px;line-height:23.0px;font-weight:400;color:#000;letter-spacing:-0.2px;-webkit-text-stroke:0.25px #000;">acct_1M</div>
<div style="position:absolute;left:2296.2px;top:857.3px;width:6px;height:6px;border-radius:3px;background:#757575"></div>
<div style="position:absolute;left:2296.2px;top:867.0px;width:6px;height:6px;border-radius:3px;background:#757575"></div>
<div style="position:absolute;left:2296.2px;top:876.5px;width:6px;height:6px;border-radius:3px;background:#757575"></div>
<svg style="position:absolute;left:472.967px;top:923.8670000000001px;" width="38.664" height="38.664" viewBox="0 0 24 24"><path fill="#707070" d="M19 5v14H5V5h14m0-2H5c-1.11 0-2 .9-2 2v14c0 1.1.89 2 2 2h14c1.1 0 2-.9 2-2V5c0-1.1-.9-2-2-2z"/></svg>
<div style="position:absolute;left:619.5px;top:935px;width:1.8px;height:16px;background:#333;"></div>
<div class="t" style="left:887.06px;top:932.23px;font-size:23.0px;line-height:23.0px;font-weight:400;color:#000;transform:scaleX(0.9716);transform-origin:0 0;-webkit-text-stroke:0.25px #000;">Last 5% plan 04/23</div>
<div class="t" style="left:1157.06px;top:932.23px;font-size:23.0px;line-height:23.0px;font-weight:400;color:#000;transform:scaleX(0.9444);transform-origin:0 0;-webkit-text-stroke:0.25px #000;">0,00 £</div>
<div class="t" style="left:1427.00px;top:932.23px;font-size:23.0px;line-height:23.0px;font-weight:400;color:#000;letter-spacing:0.15px;-webkit-text-stroke:0.25px #000;">Активирован</div>
<div class="t" style="left:1694.40px;top:932.23px;font-size:23.0px;line-height:23.0px;font-weight:400;color:#000;letter-spacing:0px;-webkit-text-stroke:0.25px #000;">-</div>
<div class="t" style="left:1965.00px;top:932.23px;font-size:23.0px;line-height:23.0px;font-weight:400;color:#000;letter-spacing:-0.2px;-webkit-text-stroke:0.25px #000;">acct_1M</div>
<div style="position:absolute;left:2296.2px;top:930.3px;width:6px;height:6px;border-radius:3px;background:#757575"></div>
<div style="position:absolute;left:2296.2px;top:940.0px;width:6px;height:6px;border-radius:3px;background:#757575"></div>
<div style="position:absolute;left:2296.2px;top:949.5px;width:6px;height:6px;border-radius:3px;background:#757575"></div>
<svg style="position:absolute;left:472.967px;top:996.8670000000001px;" width="38.664" height="38.664" viewBox="0 0 24 24"><path fill="#707070" d="M19 5v14H5V5h14m0-2H5c-1.11 0-2 .9-2 2v14c0 1.1.89 2 2 2h14c1.1 0 2-.9 2-2V5c0-1.1-.9-2-2-2z"/></svg>
<div style="position:absolute;left:619.5px;top:1008px;width:1.8px;height:16px;background:#333;"></div>
<div class="t" style="left:887.06px;top:1005.23px;font-size:23.0px;line-height:23.0px;font-weight:400;color:#000;transform:scaleX(0.9716);transform-origin:0 0;-webkit-text-stroke:0.25px #000;">Last 5% plan 04/23</div>
<div class="t" style="left:1157.06px;top:1005.23px;font-size:23.0px;line-height:23.0px;font-weight:400;color:#000;transform:scaleX(0.9444);transform-origin:0 0;-webkit-text-stroke:0.25px #000;">0,00 £</div>
<div class="t" style="left:1427.00px;top:1005.23px;font-size:23.0px;line-height:23.0px;font-weight:400;color:#000;letter-spacing:0.15px;-webkit-text-stroke:0.25px #000;">Активирован</div>
<div class="t" style="left:1694.40px;top:1005.23px;font-size:23.0px;line-height:23.0px;font-weight:400;color:#000;letter-spacing:0px;-webkit-text-stroke:0.25px #000;">-</div>
<div class="t" style="left:1965.00px;top:1005.23px;font-size:23.0px;line-height:23.0px;font-weight:400;color:#000;letter-spacing:-0.2px;-webkit-text-stroke:0.25px #000;">acct_1M</div>
<div style="position:absolute;left:2296.2px;top:1003.3px;width:6px;height:6px;border-radius:3px;background:#757575"></div>
<div style="position:absolute;left:2296.2px;top:1013.0px;width:6px;height:6px;border-radius:3px;background:#757575"></div>
<div style="position:absolute;left:2296.2px;top:1022.5px;width:6px;height:6px;border-radius:3px;background:#757575"></div>
<svg style="position:absolute;left:472.967px;top:1069.867px;" width="38.664" height="38.664" viewBox="0 0 24 24"><path fill="#707070" d="M19 5v14H5V5h14m0-2H5c-1.11 0-2 .9-2 2v14c0 1.1.89 2 2 2h14c1.1 0 2-.9 2-2V5c0-1.1-.9-2-2-2z"/></svg>
<div style="position:absolute;left:619.5px;top:1081px;width:1.8px;height:16px;background:#333;"></div>
<div class="t" style="left:887.06px;top:1078.23px;font-size:23.0px;line-height:23.0px;font-weight:400;color:#000;transform:scaleX(0.9716);transform-origin:0 0;-webkit-text-stroke:0.25px #000;">Last 5% plan 04/23</div>
<div class="t" style="left:1157.06px;top:1078.23px;font-size:23.0px;line-height:23.0px;font-weight:400;color:#000;transform:scaleX(0.9444);transform-origin:0 0;-webkit-text-stroke:0.25px #000;">0,00 £</div>
<div class="t" style="left:1427.00px;top:1078.23px;font-size:23.0px;line-height:23.0px;font-weight:400;color:#000;letter-spacing:0.15px;-webkit-text-stroke:0.25px #000;">Активирован</div>
<div class="t" style="left:1694.40px;top:1078.23px;font-size:23.0px;line-height:23.0px;font-weight:400;color:#000;letter-spacing:0px;-webkit-text-stroke:0.25px #000;">-</div>
<div class="t" style="left:1965.00px;top:1078.23px;font-size:23.0px;line-height:23.0px;font-weight:400;color:#000;letter-spacing:-0.2px;-webkit-text-stroke:0.25px #000;">acct_1N</div>
<div style="position:absolute;left:2296.2px;top:1076.3px;width:6px;height:6px;border-radius:3px;background:#757575"></div>
<div style="position:absolute;left:2296.2px;top:1086.0px;width:6px;height:6px;border-radius:3px;background:#757575"></div>
<div style="position:absolute;left:2296.2px;top:1095.5px;width:6px;height:6px;border-radius:3px;background:#757575"></div>
<svg style="position:absolute;left:472.967px;top:1142.867px;" width="38.664" height="38.664" viewBox="0 0 24 24"><path fill="#707070" d="M19 5v14H5V5h14m0-2H5c-1.11 0-2 .9-2 2v14c0 1.1.89 2 2 2h14c1.1 0 2-.9 2-2V5c0-1.1-.9-2-2-2z"/></svg>
<div style="position:absolute;left:619.5px;top:1154px;width:1.8px;height:16px;background:#333;"></div>
<div class="t" style="left:887.06px;top:1151.23px;font-size:23.0px;line-height:23.0px;font-weight:400;color:#000;transform:scaleX(0.9716);transform-origin:0 0;-webkit-text-stroke:0.25px #000;">Last 5% plan 04/23</div>
<div class="t" style="left:1157.06px;top:1151.23px;font-size:23.0px;line-height:23.0px;font-weight:400;color:#000;transform:scaleX(0.9444);transform-origin:0 0;-webkit-text-stroke:0.25px #000;">0,00 £</div>
<div class="t" style="left:1427.00px;top:1151.23px;font-size:23.0px;line-height:23.0px;font-weight:400;color:#000;letter-spacing:0.15px;-webkit-text-stroke:0.25px #000;">Активирован</div>
<div class="t" style="left:1694.40px;top:1151.23px;font-size:23.0px;line-height:23.0px;font-weight:400;color:#000;letter-spacing:0px;-webkit-text-stroke:0.25px #000;">-</div>
<div class="t" style="left:1965.00px;top:1151.23px;font-size:23.0px;line-height:23.0px;font-weight:400;color:#000;letter-spacing:-0.2px;-webkit-text-stroke:0.25px #000;">acct_1N</div>
<div style="position:absolute;left:2296.2px;top:1149.3px;width:6px;height:6px;border-radius:3px;background:#757575"></div>
<div style="position:absolute;left:2296.2px;top:1159.0px;width:6px;height:6px;border-radius:3px;background:#757575"></div>
<div style="position:absolute;left:2296.2px;top:1168.5px;width:6px;height:6px;border-radius:3px;background:#757575"></div>
<svg style="position:absolute;left:472.967px;top:1215.867px;" width="38.664" height="38.664" viewBox="0 0 24 24"><path fill="#707070" d="M19 5v14H5V5h14m0-2H5c-1.11 0-2 .9-2 2v14c0 1.1.89 2 2 2h14c1.1 0 2-.9 2-2V5c0-1.1-.9-2-2-2z"/></svg>
<div style="position:absolute;left:619.5px;top:1227px;width:1.8px;height:16px;background:#333;"></div>
<div class="t" style="left:887.06px;top:1224.23px;font-size:23.0px;line-height:23.0px;font-weight:400;color:#000;transform:scaleX(0.9716);transform-origin:0 0;-webkit-text-stroke:0.25px #000;">Last 5% plan 04/23</div>
<div class="t" style="left:1157.06px;top:1224.23px;font-size:23.0px;line-height:23.0px;font-weight:400;color:#000;transform:scaleX(0.9444);transform-origin:0 0;-webkit-text-stroke:0.25px #000;">0,00 £</div>
<div class="t" style="left:1427.00px;top:1224.23px;font-size:23.0px;line-height:23.0px;font-weight:400;color:#000;letter-spacing:0.15px;-webkit-text-stroke:0.25px #000;">Активирован</div>
<div class="t" style="left:1694.40px;top:1224.23px;font-size:23.0px;line-height:23.0px;font-weight:400;color:#000;letter-spacing:0px;-webkit-text-stroke:0.25px #000;">-</div>
<div class="t" style="left:1965.00px;top:1224.23px;font-size:23.0px;line-height:23.0px;font-weight:400;color:#000;letter-spacing:-0.2px;-webkit-text-stroke:0.25px #000;">acct_1L</div>
<div style="position:absolute;left:2296.2px;top:1222.3px;width:6px;height:6px;border-radius:3px;background:#757575"></div>
<div style="position:absolute;left:2296.2px;top:1232.0px;width:6px;height:6px;border-radius:3px;background:#757575"></div>
<div style="position:absolute;left:2296.2px;top:1241.5px;width:6px;height:6px;border-radius:3px;background:#757575"></div>
<div style="position:absolute;left:621px;top:537px;width:121px;height:21px;background:#fcfcfc;"></div>
<div style="position:absolute;left:925px;top:537px;width:141px;height:21px;background:#fcfcfc;"></div>
<div style="position:absolute;left:2041px;top:537px;width:140px;height:21px;background:#fcfcfc;"></div>
<div style="position:absolute;left:621px;top:600px;width:121px;height:21px;background:#fcfcfc;"></div>
<div style="position:absolute;left:925px;top:600px;width:141px;height:21px;background:#fcfcfc;"></div>
<div style="position:absolute;left:2041px;top:600px;width:140px;height:21px;background:#fcfcfc;"></div>
<div style="position:absolute;left:621px;top:684px;width:121px;height:21px;background:#fcfcfc;"></div>
<div style="position:absolute;left:925px;top:684px;width:141px;height:21px;background:#fcfcfc;"></div>
<div style="position:absolute;left:2041px;top:684px;width:140px;height:21px;background:#fcfcfc;"></div>
<div style="position:absolute;left:621px;top:747px;width:121px;height:21px;background:#fcfcfc;"></div>
<div style="position:absolute;left:925px;top:747px;width:141px;height:21px;background:#fcfcfc;"></div>
<div style="position:absolute;left:2041px;top:747px;width:140px;height:21px;background:#fcfcfc;"></div>
<div style="position:absolute;left:621px;top:831px;width:121px;height:21px;background:#fcfcfc;"></div>
<div style="position:absolute;left:925px;top:831px;width:141px;height:21px;background:#fcfcfc;"></div>
<div style="position:absolute;left:2041px;top:831px;width:140px;height:21px;background:#fcfcfc;"></div>
<div style="position:absolute;left:621px;top:894px;width:121px;height:21px;background:#fcfcfc;"></div>
<div style="position:absolute;left:925px;top:894px;width:141px;height:21px;background:#fcfcfc;"></div>
<div style="position:absolute;left:2041px;top:894px;width:140px;height:21px;background:#fcfcfc;"></div>
<div style="position:absolute;left:621px;top:978px;width:121px;height:21px;background:#fcfcfc;"></div>
<div style="position:absolute;left:925px;top:978px;width:141px;height:21px;background:#fcfcfc;"></div>
<div style="position:absolute;left:2041px;top:978px;width:140px;height:21px;background:#fcfcfc;"></div>
<div style="position:absolute;left:621px;top:1041px;width:121px;height:21px;background:#fcfcfc;"></div>
<div style="position:absolute;left:925px;top:1041px;width:141px;height:21px;background:#fcfcfc;"></div>
<div style="position:absolute;left:2041px;top:1041px;width:140px;height:21px;background:#fcfcfc;"></div>
<div style="position:absolute;left:621px;top:1125px;width:121px;height:21px;background:#fcfcfc;"></div>
<div style="position:absolute;left:925px;top:1125px;width:141px;height:21px;background:#fcfcfc;"></div>
<div style="position:absolute;left:2041px;top:1125px;width:140px;height:21px;background:#fcfcfc;"></div>
<div style="position:absolute;left:621px;top:1188px;width:121px;height:21px;background:#fcfcfc;"></div>
<div style="position:absolute;left:925px;top:1188px;width:141px;height:21px;background:#fcfcfc;"></div>
<div style="position:absolute;left:2041px;top:1188px;width:140px;height:21px;background:#fcfcfc;"></div>
<div style="position:absolute;left:925px;top:489px;width:141px;height:32px;background:#fff;"></div>
<div style="position:absolute;left:2041px;top:489px;width:140px;height:32px;background:#fff;"></div>
<div style="position:absolute;left:925px;top:562px;width:141px;height:32px;background:#fff;"></div>
<div style="position:absolute;left:2041px;top:562px;width:140px;height:32px;background:#fff;"></div>
<div style="position:absolute;left:925px;top:635px;width:141px;height:32px;background:#fff;"></div>
<div style="position:absolute;left:2041px;top:635px;width:140px;height:32px;background:#fff;"></div>
<div style="position:absolute;left:925px;top:708px;width:141px;height:32px;background:#fff;"></div>
<div style="position:absolute;left:2041px;top:708px;width:140px;height:32px;background:#fff;"></div>
<div style="position:absolute;left:925px;top:781px;width:141px;height:32px;background:#fff;"></div>
<div style="position:absolute;left:2041px;top:781px;width:140px;height:32px;background:#fff;"></div>
<div style="position:absolute;left:925px;top:854px;width:141px;height:32px;background:#fff;"></div>
<div style="position:absolute;left:2041px;top:854px;width:140px;height:32px;background:#fff;"></div>
<div style="position:absolute;left:925px;top:927px;width:141px;height:32px;background:#fff;"></div>
<div style="position:absolute;left:2041px;top:927px;width:140px;height:32px;background:#fff;"></div>
<div style="position:absolute;left:925px;top:1000px;width:141px;height:32px;background:#fff;"></div>
<div style="position:absolute;left:2041px;top:1000px;width:140px;height:32px;background:#fff;"></div>
<div style="position:absolute;left:925px;top:1073px;width:141px;height:32px;background:#fff;"></div>
<div style="position:absolute;left:2041px;top:1073px;width:140px;height:32px;background:#fff;"></div>
<div style="position:absolute;left:925px;top:1146px;width:141px;height:32px;background:#fff;"></div>
<div style="position:absolute;left:2041px;top:1146px;width:140px;height:32px;background:#fff;"></div>
<div style="position:absolute;left:925px;top:1209px;width:141px;height:30px;background:#fff;"></div>
<div style="position:absolute;left:2041px;top:1209px;width:140px;height:41px;background:#fff;"></div>
<div style="position:absolute;left:621px;top:495px;width:9px;height:21px;background:#e0e0e0;"></div>
<div style="position:absolute;left:630px;top:495px;width:21px;height:21px;background:#a9a9a9;"></div>
<div style="position:absolute;left:651px;top:495px;width:21px;height:21px;background:#b3b3b3;"></div>
<div style="position:absolute;left:672px;top:495px;width:21px;height:21px;background:#aaaaaa;"></div>
<div style="position:absolute;left:693px;top:495px;width:21px;height:21px;background:#b5b5b5;"></div>
<div style="position:absolute;left:714px;top:495px;width:21px;height:21px;background:#ececec;"></div>
<div style="position:absolute;left:735px;top:495px;width:7px;height:21px;background:#ffffff;"></div>
<div style="position:absolute;left:925px;top:495px;width:20px;height:21px;background:#c3c3c3;"></div>
<div style="position:absolute;left:945px;top:495px;width:21px;height:21px;background:#adadad;"></div>
<div style="position:absolute;left:966px;top:495px;width:21px;height:21px;background:#c3c3c3;"></div>
<div style="position:absolute;left:987px;top:495px;width:21px;height:21px;background:#b0b0b0;"></div>
<div style="position:absolute;left:1008px;top:495px;width:21px;height:21px;background:#c8c8c8;"></div>
<div style="position:absolute;left:1029px;top:495px;width:21px;height:21px;background:#c8c8c8;"></div>
<div style="position:absolute;left:1050px;top:495px;width:16px;height:21px;background:#bdbdbd;"></div>
<div style="position:absolute;left:2041px;top:495px;width:17px;height:21px;background:#a5a5a5;"></div>
<div style="position:absolute;left:2058px;top:495px;width:21px;height:21px;background:#b0b0b0;"></div>
<div style="position:absolute;left:2079px;top:495px;width:21px;height:21px;background:#a0a0a0;"></div>
<div style="position:absolute;left:2100px;top:495px;width:21px;height:21px;background:#bdbdbd;"></div>
<div style="position:absolute;left:2121px;top:495px;width:21px;height:21px;background:#b5b5b5;"></div>
<div style="position:absolute;left:2142px;top:495px;width:18px;height:21px;background:#bebebe;"></div>
<div style="position:absolute;left:2160px;top:495px;width:21px;height:21px;background:#f3f3f3;"></div>
<div style="position:absolute;left:621px;top:558px;width:9px;height:21px;background:#ececec;"></div>
<div style="position:absolute;left:630px;top:558px;width:21px;height:21px;background:#d1d1d1;"></div>
<div style="position:absolute;left:651px;top:558px;width:21px;height:21px;background:#cfcfcf;"></div>
<div style="position:absolute;left:672px;top:558px;width:21px;height:21px;background:#d2d2d2;"></div>
<div style="position:absolute;left:693px;top:558px;width:21px;height:21px;background:#d0d0d0;"></div>
<div style="position:absolute;left:714px;top:558px;width:21px;height:21px;background:#ffffff;"></div>
<div style="position:absolute;left:735px;top:558px;width:7px;height:21px;background:#ffffff;"></div>
<div style="position:absolute;left:621px;top:579px;width:9px;height:21px;background:#eeeeee;"></div>
<div style="position:absolute;left:630px;top:579px;width:21px;height:21px;background:#ececec;"></div>
<div style="position:absolute;left:651px;top:579px;width:21px;height:21px;background:#ededed;"></div>
<div style="position:absolute;left:672px;top:579px;width:21px;height:21px;background:#ededed;"></div>
<div style="position:absolute;left:693px;top:579px;width:21px;height:21px;background:#eaeaea;"></div>
<div style="position:absolute;left:714px;top:579px;width:21px;height:21px;background:#ffffff;"></div>
<div style="position:absolute;left:735px;top:579px;width:7px;height:21px;background:#ffffff;"></div>
<div style="position:absolute;left:925px;top:558px;width:20px;height:21px;background:#d8d8d8;"></div>
<div style="position:absolute;left:945px;top:558px;width:21px;height:21px;background:#cbcbcb;"></div>
<div style="position:absolute;left:966px;top:558px;width:21px;height:21px;background:#e2e2e2;"></div>
<div style="position:absolute;left:987px;top:558px;width:21px;height:21px;background:#d5d5d5;"></div>
<div style="position:absolute;left:1008px;top:558px;width:21px;height:21px;background:#dcdcdc;"></div>
<div style="position:absolute;left:1029px;top:558px;width:21px;height:21px;background:#dcdcdc;"></div>
<div style="position:absolute;left:1050px;top:558px;width:16px;height:21px;background:#d3d3d3;"></div>
<div style="position:absolute;left:925px;top:579px;width:20px;height:21px;background:#ebebeb;"></div>
<div style="position:absolute;left:945px;top:579px;width:21px;height:21px;background:#e6e6e6;"></div>
<div style="position:absolute;left:966px;top:579px;width:21px;height:21px;background:#e3e3e3;"></div>
<div style="position:absolute;left:987px;top:579px;width:21px;height:21px;background:#dfdfdf;"></div>
<div style="position:absolute;left:1008px;top:579px;width:21px;height:21px;background:#eaeaea;"></div>
<div style="position:absolute;left:1029px;top:579px;width:21px;height:21px;background:#eaeaea;"></div>
<div style="position:absolute;left:1050px;top:579px;width:16px;height:21px;background:#e6e6e6;"></div>
<div style="position:absolute;left:2041px;top:558px;width:17px;height:21px;background:#d3d3d3;"></div>
<div style="position:absolute;left:2058px;top:558px;width:21px;height:21px;background:#c7c7c7;"></div>
<div style="position:absolute;left:2079px;top:558px;width:21px;height:21px;background:#cccccc;"></div>
<div style="position:absolute;left:2100px;top:558px;width:21px;height:21px;background:#d0d0d0;"></div>
<div style="position:absolute;left:2121px;top:558px;width:21px;height:21px;background:#d0d0d0;"></div>
<div style="position:absolute;left:2142px;top:558px;width:18px;height:21px;background:#cfcfcf;"></div>
<div style="position:absolute;left:2160px;top:558px;width:21px;height:21px;background:#ffffff;"></div>
<div style="position:absolute;left:2041px;top:579px;width:17px;height:21px;background:#e6e6e6;"></div>
<div style="position:absolute;left:2058px;top:579px;width:21px;height:21px;background:#e6e6e6;"></div>
<div style="position:absolute;left:2079px;top:579px;width:21px;height:21px;background:#e2e2e2;"></div>
<div style="position:absolute;left:2100px;top:579px;width:21px;height:21px;background:#e3e3e3;"></div>
<div style="position:absolute;left:2121px;top:579px;width:21px;height:21px;background:#dfdfdf;"></div>
<div style="position:absolute;left:2142px;top:579px;width:18px;height:21px;background:#e8e8e8;"></div>
<div style="position:absolute;left:2160px;top:579px;width:21px;height:21px;background:#f6f6f6;"></div>
<div style="position:absolute;left:621px;top:642px;width:9px;height:21px;background:#e0e0e0;"></div>
<div style="position:absolute;left:630px;top:642px;width:21px;height:21px;background:#bfbfbf;"></div>
<div style="position:absolute;left:651px;top:642px;width:21px;height:21px;background:#bcbcbc;"></div>
<div style="position:absolute;left:672px;top:642px;width:21px;height:21px;background:#bdbdbd;"></div>
<div style="position:absolute;left:693px;top:642px;width:21px;height:21px;background:#b7b7b7;"></div>
<div style="position:absolute;left:714px;top:642px;width:21px;height:21px;background:#ffffff;"></div>
<div style="position:absolute;left:735px;top:642px;width:7px;height:21px;background:#ffffff;"></div>
<div style="position:absolute;left:925px;top:642px;width:20px;height:21px;background:#c3c3c3;"></div>
<div style="position:absolute;left:945px;top:642px;width:21px;height:21px;background:#adadad;"></div>
<div style="position:absolute;left:966px;top:642px;width:21px;height:21px;background:#c3c3c3;"></div>
<div style="position:absolute;left:987px;top:642px;width:21px;height:21px;background:#b0b0b0;"></div>
<div style="position:absolute;left:1008px;top:642px;width:21px;height:21px;background:#c8c8c8;"></div>
<div style="position:absolute;left:1029px;top:642px;width:21px;height:21px;background:#c8c8c8;"></div>
<div style="position:absolute;left:1050px;top:642px;width:16px;height:21px;background:#bdbdbd;"></div>
<div style="position:absolute;left:2041px;top:642px;width:17px;height:21px;background:#c4c4c4;"></div>
<div style="position:absolute;left:2058px;top:642px;width:21px;height:21px;background:#b3b3b3;"></div>
<div style="position:absolute;left:2079px;top:642px;width:21px;height:21px;background:#bdbdbd;"></div>
<div style="position:absolute;left:2100px;top:642px;width:21px;height:21px;background:#adadad;"></div>
<div style="position:absolute;left:2121px;top:642px;width:21px;height:21px;background:#c4c4c4;"></div>
<div style="position:absolute;left:2142px;top:642px;width:18px;height:21px;background:#c8c8c8;"></div>
<div style="position:absolute;left:2160px;top:642px;width:21px;height:21px;background:#f3f3f3;"></div>
<div style="position:absolute;left:621px;top:705px;width:9px;height:21px;background:#ececec;"></div>
<div style="position:absolute;left:630px;top:705px;width:21px;height:21px;background:#c4c4c4;"></div>
<div style="position:absolute;left:651px;top:705px;width:21px;height:21px;background:#d3d3d3;"></div>
<div style="position:absolute;left:672px;top:705px;width:21px;height:21px;background:#dedede;"></div>
<div style="position:absolute;left:693px;top:705px;width:21px;height:21px;background:#d4d4d4;"></div>
<div style="position:absolute;left:714px;top:705px;width:21px;height:21px;background:#ffffff;"></div>
<div style="position:absolute;left:735px;top:705px;width:7px;height:21px;background:#ffffff;"></div>
<div style="position:absolute;left:621px;top:726px;width:9px;height:21px;background:#f0f0f0;"></div>
<div style="position:absolute;left:630px;top:726px;width:21px;height:21px;background:#e6e6e6;"></div>
<div style="position:absolute;left:651px;top:726px;width:21px;height:21px;background:#f3f3f3;"></div>
<div style="position:absolute;left:672px;top:726px;width:21px;height:21px;background:#ededed;"></div>
<div style="position:absolute;left:693px;top:726px;width:21px;height:21px;background:#ececec;"></div>
<div style="position:absolute;left:714px;top:726px;width:21px;height:21px;background:#ffffff;"></div>
<div style="position:absolute;left:735px;top:726px;width:7px;height:21px;background:#ffffff;"></div>
<div style="position:absolute;left:925px;top:705px;width:20px;height:21px;background:#d8d8d8;"></div>
<div style="position:absolute;left:945px;top:705px;width:21px;height:21px;background:#cbcbcb;"></div>
<div style="position:absolute;left:966px;top:705px;width:21px;height:21px;background:#e2e2e2;"></div>
<div style="position:absolute;left:987px;top:705px;width:21px;height:21px;background:#d5d5d5;"></div>
<div style="position:absolute;left:1008px;top:705px;width:21px;height:21px;background:#dcdcdc;"></div>
<div style="position:absolute;left:1029px;top:705px;width:21px;height:21px;background:#dcdcdc;"></div>
<div style="position:absolute;left:1050px;top:705px;width:16px;height:21px;background:#d3d3d3;"></div>
<div style="position:absolute;left:925px;top:726px;width:20px;height:21px;background:#ebebeb;"></div>
<div style="position:absolute;left:945px;top:726px;width:21px;height:21px;background:#e6e6e6;"></div>
<div style="position:absolute;left:966px;top:726px;width:21px;height:21px;background:#e3e3e3;"></div>
<div style="position:absolute;left:987px;top:726px;width:21px;height:21px;background:#dfdfdf;"></div>
<div style="position:absolute;left:1008px;top:726px;width:21px;height:21px;background:#eaeaea;"></div>
<div style="position:absolute;left:1029px;top:726px;width:21px;height:21px;background:#eaeaea;"></div>
<div style="position:absolute;left:1050px;top:726px;width:16px;height:21px;background:#e6e6e6;"></div>
<div style="position:absolute;left:2041px;top:705px;width:17px;height:21px;background:#c4c4c4;"></div>
<div style="position:absolute;left:2058px;top:705px;width:21px;height:21px;background:#d4d4d4;"></div>
<div style="position:absolute;left:2079px;top:705px;width:21px;height:21px;background:#d0d0d0;"></div>
<div style="position:absolute;left:2100px;top:705px;width:21px;height:21px;background:#c8c8c8;"></div>
<div style="position:absolute;left:2121px;top:705px;width:21px;height:21px;background:#dadada;"></div>
<div style="position:absolute;left:2142px;top:705px;width:18px;height:21px;background:#dadada;"></div>
<div style="position:absolute;left:2160px;top:705px;width:21px;height:21px;background:#ffffff;"></div>
<div style="position:absolute;left:2041px;top:726px;width:17px;height:21px;background:#e8e8e8;"></div>
<div style="position:absolute;left:2058px;top:726px;width:21px;height:21px;background:#e4e4e4;"></div>
<div style="position:absolute;left:2079px;top:726px;width:21px;height:21px;background:#ececec;"></div>
<div style="position:absolute;left:2100px;top:726px;width:21px;height:21px;background:#e6e6e6;"></div>
<div style="position:absolute;left:2121px;top:726px;width:21px;height:21px;background:#f0f0f0;"></div>
<div style="position:absolute;left:2142px;top:726px;width:18px;height:21px;background:#e0e0e0;"></div>
<div style="position:absolute;left:2160px;top:726px;width:21px;height:21px;background:#f6f6f6;"></div>
<div style="position:absolute;left:621px;top:768px;width:9px;height:21px;background:#fafafa;"></div>
<div style="position:absolute;left:630px;top:768px;width:21px;height:21px;background:#f8f8f8;"></div>
<div style="position:absolute;left:651px;top:768px;width:21px;height:21px;background:#f8f8f8;"></div>
<div style="position:absolute;left:672px;top:768px;width:21px;height:21px;background:#f8f8f8;"></div>
<div style="position:absolute;left:693px;top:768px;width:21px;height:21px;background:#f5f5f5;"></div>
<div style="position:absolute;left:714px;top:768px;width:21px;height:21px;background:#ffffff;"></div>
<div style="position:absolute;left:735px;top:768px;width:7px;height:21px;background:#ffffff;"></div>
<div style="position:absolute;left:621px;top:789px;width:9px;height:21px;background:#e0e0e0;"></div>
<div style="position:absolute;left:630px;top:789px;width:21px;height:21px;background:#bbbbbb;"></div>
<div style="position:absolute;left:651px;top:789px;width:21px;height:21px;background:#bbbbbb;"></div>
<div style="position:absolute;left:672px;top:789px;width:21px;height:21px;background:#d4d4d4;"></div>
<div style="position:absolute;left:693px;top:789px;width:21px;height:21px;background:#c2c2c2;"></div>
<div style="position:absolute;left:714px;top:789px;width:21px;height:21px;background:#ffffff;"></div>
<div style="position:absolute;left:735px;top:789px;width:7px;height:21px;background:#ffffff;"></div>
<div style="position:absolute;left:925px;top:768px;width:20px;height:21px;background:#f8f8f8;"></div>
<div style="position:absolute;left:945px;top:768px;width:21px;height:21px;background:#f6f6f6;"></div>
<div style="position:absolute;left:966px;top:768px;width:21px;height:21px;background:#fcfcfc;"></div>
<div style="position:absolute;left:987px;top:768px;width:21px;height:21px;background:#fcfcfc;"></div>
<div style="position:absolute;left:1008px;top:768px;width:21px;height:21px;background:#fafafa;"></div>
<div style="position:absolute;left:1029px;top:768px;width:21px;height:21px;background:#fafafa;"></div>
<div style="position:absolute;left:1050px;top:768px;width:16px;height:21px;background:#f5f5f5;"></div>
<div style="position:absolute;left:925px;top:789px;width:20px;height:21px;background:#c3c3c3;"></div>
<div style="position:absolute;left:945px;top:789px;width:21px;height:21px;background:#adadad;"></div>
<div style="position:absolute;left:966px;top:789px;width:21px;height:21px;background:#c3c3c3;"></div>
<div style="position:absolute;left:987px;top:789px;width:21px;height:21px;background:#b0b0b0;"></div>
<div style="position:absolute;left:1008px;top:789px;width:21px;height:21px;background:#c8c8c8;"></div>
<div style="position:absolute;left:1029px;top:789px;width:21px;height:21px;background:#c8c8c8;"></div>
<div style="position:absolute;left:1050px;top:789px;width:16px;height:21px;background:#bdbdbd;"></div>
<div style="position:absolute;left:2041px;top:768px;width:17px;height:21px;background:#fafafa;"></div>
<div style="position:absolute;left:2058px;top:768px;width:21px;height:21px;background:#f8f8f8;"></div>
<div style="position:absolute;left:2079px;top:768px;width:21px;height:21px;background:#f8f8f8;"></div>
<div style="position:absolute;left:2100px;top:768px;width:21px;height:21px;background:#f8f8f8;"></div>
<div style="position:absolute;left:2121px;top:768px;width:21px;height:21px;background:#f8f8f8;"></div>
<div style="position:absolute;left:2142px;top:768px;width:18px;height:21px;background:#ffffff;"></div>
<div style="position:absolute;left:2160px;top:768px;width:21px;height:21px;background:#ffffff;"></div>
<div style="position:absolute;left:2041px;top:789px;width:17px;height:21px;background:#c6c6c6;"></div>
<div style="position:absolute;left:2058px;top:789px;width:21px;height:21px;background:#b0b0b0;"></div>
<div style="position:absolute;left:2079px;top:789px;width:21px;height:21px;background:#b3b3b3;"></div>
<div style="position:absolute;left:2100px;top:789px;width:21px;height:21px;background:#b8b8b8;"></div>
<div style="position:absolute;left:2121px;top:789px;width:21px;height:21px;background:#a8a8a8;"></div>
<div style="position:absolute;left:2142px;top:789px;width:18px;height:21px;background:#cccccc;"></div>
<div style="position:absolute;left:2160px;top:789px;width:21px;height:21px;background:#f6f6f6;"></div>
<div style="position:absolute;left:621px;top:852px;width:9px;height:21px;background:#ececec;"></div>
<div style="position:absolute;left:630px;top:852px;width:21px;height:21px;background:#bbbbbb;"></div>
<div style="position:absolute;left:651px;top:852px;width:21px;height:21px;background:#c4c4c4;"></div>
<div style="position:absolute;left:672px;top:852px;width:21px;height:21px;background:#bcbcbc;"></div>
<div style="position:absolute;left:693px;top:852px;width:21px;height:21px;background:#d3d3d3;"></div>
<div style="position:absolute;left:714px;top:852px;width:21px;height:21px;background:#ededed;"></div>
<div style="position:absolute;left:735px;top:852px;width:7px;height:21px;background:#ffffff;"></div>
<div style="position:absolute;left:621px;top:873px;width:9px;height:21px;background:#f0f0f0;"></div>
<div style="position:absolute;left:630px;top:873px;width:21px;height:21px;background:#efefef;"></div>
<div style="position:absolute;left:651px;top:873px;width:21px;height:21px;background:#f0f0f0;"></div>
<div style="position:absolute;left:672px;top:873px;width:21px;height:21px;background:#f1f1f1;"></div>
<div style="position:absolute;left:693px;top:873px;width:21px;height:21px;background:#e8e8e8;"></div>
<div style="position:absolute;left:714px;top:873px;width:21px;height:21px;background:#f8f8f8;"></div>
<div style="position:absolute;left:735px;top:873px;width:7px;height:21px;background:#ffffff;"></div>
<div style="position:absolute;left:925px;top:852px;width:20px;height:21px;background:#d8d8d8;"></div>
<div style="position:absolute;left:945px;top:852px;width:21px;height:21px;background:#cbcbcb;"></div>
<div style="position:absolute;left:966px;top:852px;width:21px;height:21px;background:#e2e2e2;"></div>
<div style="position:absolute;left:987px;top:852px;width:21px;height:21px;background:#d5d5d5;"></div>
<div style="position:absolute;left:1008px;top:852px;width:21px;height:21px;background:#dcdcdc;"></div>
<div style="position:absolute;left:1029px;top:852px;width:21px;height:21px;background:#dcdcdc;"></div>
<div style="position:absolute;left:1050px;top:852px;width:16px;height:21px;background:#d3d3d3;"></div>
<div style="position:absolute;left:925px;top:873px;width:20px;height:21px;background:#ebebeb;"></div>
<div style="position:absolute;left:945px;top:873px;width:21px;height:21px;background:#e6e6e6;"></div>
<div style="position:absolute;left:966px;top:873px;width:21px;height:21px;background:#e3e3e3;"></div>
<div style="position:absolute;left:987px;top:873px;width:21px;height:21px;background:#dfdfdf;"></div>
<div style="position:absolute;left:1008px;top:873px;width:21px;height:21px;background:#eaeaea;"></div>
<div style="position:absolute;left:1029px;top:873px;width:21px;height:21px;background:#eaeaea;"></div>
<div style="position:absolute;left:1050px;top:873px;width:16px;height:21px;background:#e6e6e6;"></div>
<div style="position:absolute;left:2041px;top:852px;width:17px;height:21px;background:#c4c4c4;"></div>
<div style="position:absolute;left:2058px;top:852px;width:21px;height:21px;background:#c6c6c6;"></div>
<div style="position:absolute;left:2079px;top:852px;width:21px;height:21px;background:#c4c4c4;"></div>
<div style="position:absolute;left:2100px;top:852px;width:21px;height:21px;background:#d0d0d0;"></div>
<div style="position:absolute;left:2121px;top:852px;width:21px;height:21px;background:#cdcdcd;"></div>
<div style="position:absolute;left:2142px;top:852px;width:18px;height:21px;background:#c2c2c2;"></div>
<div style="position:absolute;left:2160px;top:852px;width:21px;height:21px;background:#ffffff;"></div>
<div style="position:absolute;left:2041px;top:873px;width:17px;height:21px;background:#eeeeee;"></div>
<div style="position:absolute;left:2058px;top:873px;width:21px;height:21px;background:#ececec;"></div>
<div style="position:absolute;left:2079px;top:873px;width:21px;height:21px;background:#ececec;"></div>
<div style="position:absolute;left:2100px;top:873px;width:21px;height:21px;background:#e8e8e8;"></div>
<div style="position:absolute;left:2121px;top:873px;width:21px;height:21px;background:#e8e8e8;"></div>
<div style="position:absolute;left:2142px;top:873px;width:18px;height:21px;background:#e6e6e6;"></div>
<div style="position:absolute;left:2160px;top:873px;width:21px;height:21px;background:#f3f3f3;"></div>
<div style="position:absolute;left:621px;top:915px;width:9px;height:21px;background:#fafafa;"></div>
<div style="position:absolute;left:630px;top:915px;width:21px;height:21px;background:#f0f0f0;"></div>
<div style="position:absolute;left:651px;top:915px;width:21px;height:21px;background:#f8f8f8;"></div>
<div style="position:absolute;left:672px;top:915px;width:21px;height:21px;background:#f4f4f4;"></div>
<div style="position:absolute;left:693px;top:915px;width:21px;height:21px;background:#f7f7f7;"></div>
<div style="position:absolute;left:714px;top:915px;width:21px;height:21px;background:#ffffff;"></div>
<div style="position:absolute;left:735px;top:915px;width:7px;height:21px;background:#ffffff;"></div>
<div style="position:absolute;left:621px;top:936px;width:9px;height:21px;background:#e0e0e0;"></div>
<div style="position:absolute;left:630px;top:936px;width:21px;height:21px;background:#cbcbcb;"></div>
<div style="position:absolute;left:651px;top:936px;width:21px;height:21px;background:#b8b8b8;"></div>
<div style="position:absolute;left:672px;top:936px;width:21px;height:21px;background:#c7c7c7;"></div>
<div style="position:absolute;left:693px;top:936px;width:21px;height:21px;background:#c6c6c6;"></div>
<div style="position:absolute;left:714px;top:936px;width:21px;height:21px;background:#ffffff;"></div>
<div style="position:absolute;left:735px;top:936px;width:7px;height:21px;background:#ffffff;"></div>
<div style="position:absolute;left:925px;top:915px;width:20px;height:21px;background:#f8f8f8;"></div>
<div style="position:absolute;left:945px;top:915px;width:21px;height:21px;background:#f6f6f6;"></div>
<div style="position:absolute;left:966px;top:915px;width:21px;height:21px;background:#fcfcfc;"></div>
<div style="position:absolute;left:987px;top:915px;width:21px;height:21px;background:#fcfcfc;"></div>
<div style="position:absolute;left:1008px;top:915px;width:21px;height:21px;background:#fafafa;"></div>
<div style="position:absolute;left:1029px;top:915px;width:21px;height:21px;background:#fafafa;"></div>
<div style="position:absolute;left:1050px;top:915px;width:16px;height:21px;background:#f5f5f5;"></div>
<div style="position:absolute;left:925px;top:936px;width:20px;height:21px;background:#c8c8c8;"></div>
<div style="position:absolute;left:945px;top:936px;width:21px;height:21px;background:#b9b9b9;"></div>
<div style="position:absolute;left:966px;top:936px;width:21px;height:21px;background:#c3c3c3;"></div>
<div style="position:absolute;left:987px;top:936px;width:21px;height:21px;background:#b3b3b3;"></div>
<div style="position:absolute;left:1008px;top:936px;width:21px;height:21px;background:#cccccc;"></div>
<div style="position:absolute;left:1029px;top:936px;width:21px;height:21px;background:#cccccc;"></div>
<div style="position:absolute;left:1050px;top:936px;width:16px;height:21px;background:#c6c6c6;"></div>
<div style="position:absolute;left:2041px;top:915px;width:17px;height:21px;background:#fafafa;"></div>
<div style="position:absolute;left:2058px;top:915px;width:21px;height:21px;background:#f8f8f8;"></div>
<div style="position:absolute;left:2079px;top:915px;width:21px;height:21px;background:#f7f7f7;"></div>
<div style="position:absolute;left:2100px;top:915px;width:21px;height:21px;background:#f3f3f3;"></div>
<div style="position:absolute;left:2121px;top:915px;width:21px;height:21px;background:#f0f0f0;"></div>
<div style="position:absolute;left:2142px;top:915px;width:18px;height:21px;background:#fbfbfb;"></div>
<div style="position:absolute;left:2160px;top:915px;width:21px;height:21px;background:#ffffff;"></div>
<div style="position:absolute;left:2041px;top:936px;width:17px;height:21px;background:#adadad;"></div>
<div style="position:absolute;left:2058px;top:936px;width:21px;height:21px;background:#aaaaaa;"></div>
<div style="position:absolute;left:2079px;top:936px;width:21px;height:21px;background:#b4b4b4;"></div>
<div style="position:absolute;left:2100px;top:936px;width:21px;height:21px;background:#b9b9b9;"></div>
<div style="position:absolute;left:2121px;top:936px;width:21px;height:21px;background:#cecece;"></div>
<div style="position:absolute;left:2142px;top:936px;width:18px;height:21px;background:#bababa;"></div>
<div style="position:absolute;left:2160px;top:936px;width:21px;height:21px;background:#e3e3e3;"></div>
<div style="position:absolute;left:621px;top:999px;width:9px;height:21px;background:#ececec;"></div>
<div style="position:absolute;left:630px;top:999px;width:21px;height:21px;background:#dbdbdb;"></div>
<div style="position:absolute;left:651px;top:999px;width:21px;height:21px;background:#cbcbcb;"></div>
<div style="position:absolute;left:672px;top:999px;width:21px;height:21px;background:#c5c5c5;"></div>
<div style="position:absolute;left:693px;top:999px;width:21px;height:21px;background:#bababa;"></div>
<div style="position:absolute;left:714px;top:999px;width:21px;height:21px;background:#f8f8f8;"></div>
<div style="position:absolute;left:735px;top:999px;width:7px;height:21px;background:#ffffff;"></div>
<div style="position:absolute;left:621px;top:1020px;width:9px;height:21px;background:#f3f3f3;"></div>
<div style="position:absolute;left:630px;top:1020px;width:21px;height:21px;background:#ededed;"></div>
<div style="position:absolute;left:651px;top:1020px;width:21px;height:21px;background:#fbfbfb;"></div>
<div style="position:absolute;left:672px;top:1020px;width:21px;height:21px;background:#f1f1f1;"></div>
<div style="position:absolute;left:693px;top:1020px;width:21px;height:21px;background:#f6f6f6;"></div>
<div style="position:absolute;left:714px;top:1020px;width:21px;height:21px;background:#ffffff;"></div>
<div style="position:absolute;left:735px;top:1020px;width:7px;height:21px;background:#ffffff;"></div>
<div style="position:absolute;left:925px;top:999px;width:20px;height:21px;background:#d8d8d8;"></div>
<div style="position:absolute;left:945px;top:999px;width:21px;height:21px;background:#cbcbcb;"></div>
<div style="position:absolute;left:966px;top:999px;width:21px;height:21px;background:#e2e2e2;"></div>
<div style="position:absolute;left:987px;top:999px;width:21px;height:21px;background:#d5d5d5;"></div>
<div style="position:absolute;left:1008px;top:999px;width:21px;height:21px;background:#dcdcdc;"></div>
<div style="position:absolute;left:1029px;top:999px;width:21px;height:21px;background:#dcdcdc;"></div>
<div style="position:absolute;left:1050px;top:999px;width:16px;height:21px;background:#d3d3d3;"></div>
<div style="position:absolute;left:925px;top:1020px;width:20px;height:21px;background:#ebebeb;"></div>
<div style="position:absolute;left:945px;top:1020px;width:21px;height:21px;background:#e6e6e6;"></div>
<div style="position:absolute;left:966px;top:1020px;width:21px;height:21px;background:#e3e3e3;"></div>
<div style="position:absolute;left:987px;top:1020px;width:21px;height:21px;background:#dfdfdf;"></div>
<div style="position:absolute;left:1008px;top:1020px;width:21px;height:21px;background:#eaeaea;"></div>
<div style="position:absolute;left:1029px;top:1020px;width:21px;height:21px;background:#eaeaea;"></div>
<div style="position:absolute;left:1050px;top:1020px;width:16px;height:21px;background:#e6e6e6;"></div>
<div style="position:absolute;left:2041px;top:999px;width:17px;height:21px;background:#c6c6c6;"></div>
<div style="position:absolute;left:2058px;top:999px;width:21px;height:21px;background:#cccccc;"></div>
<div style="position:absolute;left:2079px;top:999px;width:21px;height:21px;background:#c4c4c4;"></div>
<div style="position:absolute;left:2100px;top:999px;width:21px;height:21px;background:#cfcfcf;"></div>
<div style="position:absolute;left:2121px;top:999px;width:21px;height:21px;background:#b9b9b9;"></div>
<div style="position:absolute;left:2142px;top:999px;width:18px;height:21px;background:#d3d3d3;"></div>
<div style="position:absolute;left:2160px;top:999px;width:21px;height:21px;background:#ffffff;"></div>
<div style="position:absolute;left:2041px;top:1020px;width:17px;height:21px;background:#f2f2f2;"></div>
<div style="position:absolute;left:2058px;top:1020px;width:21px;height:21px;background:#e3e3e3;"></div>
<div style="position:absolute;left:2079px;top:1020px;width:21px;height:21px;background:#ebebeb;"></div>
<div style="position:absolute;left:2100px;top:1020px;width:21px;height:21px;background:#eeeeee;"></div>
<div style="position:absolute;left:2121px;top:1020px;width:21px;height:21px;background:#efefef;"></div>
<div style="position:absolute;left:2142px;top:1020px;width:18px;height:21px;background:#f0f0f0;"></div>
<div style="position:absolute;left:2160px;top:1020px;width:21px;height:21px;background:#f6f6f6;"></div>
<div style="position:absolute;left:621px;top:1062px;width:9px;height:21px;background:#fbfbfb;"></div>
<div style="position:absolute;left:630px;top:1062px;width:21px;height:21px;background:#f3f3f3;"></div>
<div style="position:absolute;left:651px;top:1062px;width:21px;height:21px;background:#f3f3f3;"></div>
<div style="position:absolute;left:672px;top:1062px;width:21px;height:21px;background:#f8f8f8;"></div>
<div style="position:absolute;left:693px;top:1062px;width:21px;height:21px;background:#f0f0f0;"></div>
<div style="position:absolute;left:714px;top:1062px;width:21px;height:21px;background:#ffffff;"></div>
<div style="position:absolute;left:735px;top:1062px;width:7px;height:21px;background:#ffffff;"></div>
<div style="position:absolute;left:621px;top:1083px;width:9px;height:21px;background:#e0e0e0;"></div>
<div style="position:absolute;left:630px;top:1083px;width:21px;height:21px;background:#c3c3c3;"></div>
<div style="position:absolute;left:651px;top:1083px;width:21px;height:21px;background:#c3c3c3;"></div>
<div style="position:absolute;left:672px;top:1083px;width:21px;height:21px;background:#bcbcbc;"></div>
<div style="position:absolute;left:693px;top:1083px;width:21px;height:21px;background:#bcbcbc;"></div>
<div style="position:absolute;left:714px;top:1083px;width:21px;height:21px;background:#f0f0f0;"></div>
<div style="position:absolute;left:735px;top:1083px;width:7px;height:21px;background:#ffffff;"></div>
<div style="position:absolute;left:925px;top:1062px;width:20px;height:21px;background:#f8f8f8;"></div>
<div style="position:absolute;left:945px;top:1062px;width:21px;height:21px;background:#f6f6f6;"></div>
<div style="position:absolute;left:966px;top:1062px;width:21px;height:21px;background:#fcfcfc;"></div>
<div style="position:absolute;left:987px;top:1062px;width:21px;height:21px;background:#fcfcfc;"></div>
<div style="position:absolute;left:1008px;top:1062px;width:21px;height:21px;background:#fafafa;"></div>
<div style="position:absolute;left:1029px;top:1062px;width:21px;height:21px;background:#fafafa;"></div>
<div style="position:absolute;left:1050px;top:1062px;width:16px;height:21px;background:#f5f5f5;"></div>
<div style="position:absolute;left:925px;top:1083px;width:20px;height:21px;background:#c8c8c8;"></div>
<div style="position:absolute;left:945px;top:1083px;width:21px;height:21px;background:#b9b9b9;"></div>
<div style="position:absolute;left:966px;top:1083px;width:21px;height:21px;background:#c3c3c3;"></div>
<div style="position:absolute;left:987px;top:1083px;width:21px;height:21px;background:#b3b3b3;"></div>
<div style="position:absolute;left:1008px;top:1083px;width:21px;height:21px;background:#cccccc;"></div>
<div style="position:absolute;left:1029px;top:1083px;width:21px;height:21px;background:#cccccc;"></div>
<div style="position:absolute;left:1050px;top:1083px;width:16px;height:21px;background:#c6c6c6;"></div>
<div style="position:absolute;left:2041px;top:1062px;width:17px;height:21px;background:#fafafa;"></div>
<div style="position:absolute;left:2058px;top:1062px;width:21px;height:21px;background:#f3f3f3;"></div>
<div style="position:absolute;left:2079px;top:1062px;width:21px;height:21px;background:#fefefe;"></div>
<div style="position:absolute;left:2100px;top:1062px;width:21px;height:21px;background:#f0f0f0;"></div>
<div style="position:absolute;left:2121px;top:1062px;width:21px;height:21px;background:#f0f0f0;"></div>
<div style="position:absolute;left:2142px;top:1062px;width:18px;height:21px;background:#f4f4f4;"></div>
<div style="position:absolute;left:2160px;top:1062px;width:21px;height:21px;background:#ffffff;"></div>
<div style="position:absolute;left:2041px;top:1083px;width:17px;height:21px;background:#b9b9b9;"></div>
<div style="position:absolute;left:2058px;top:1083px;width:21px;height:21px;background:#c6c6c6;"></div>
<div style="position:absolute;left:2079px;top:1083px;width:21px;height:21px;background:#c0c0c0;"></div>
<div style="position:absolute;left:2100px;top:1083px;width:21px;height:21px;background:#c3c3c3;"></div>
<div style="position:absolute;left:2121px;top:1083px;width:21px;height:21px;background:#bcbcbc;"></div>
<div style="position:absolute;left:2142px;top:1083px;width:18px;height:21px;background:#e2e2e2;"></div>
<div style="position:absolute;left:2160px;top:1083px;width:21px;height:21px;background:#fbfbfb;"></div>
<div style="position:absolute;left:621px;top:1146px;width:9px;height:21px;background:#eeeeee;"></div>
<div style="position:absolute;left:630px;top:1146px;width:21px;height:21px;background:#c8c8c8;"></div>
<div style="position:absolute;left:651px;top:1146px;width:21px;height:21px;background:#cbcbcb;"></div>
<div style="position:absolute;left:672px;top:1146px;width:21px;height:21px;background:#c3c3c3;"></div>
<div style="position:absolute;left:693px;top:1146px;width:21px;height:21px;background:#d9d9d9;"></div>
<div style="position:absolute;left:714px;top:1146px;width:21px;height:21px;background:#ffffff;"></div>
<div style="position:absolute;left:735px;top:1146px;width:7px;height:21px;background:#ffffff;"></div>
<div style="position:absolute;left:621px;top:1167px;width:9px;height:21px;background:#f3f3f3;"></div>
<div style="position:absolute;left:630px;top:1167px;width:21px;height:21px;background:#fafafa;"></div>
<div style="position:absolute;left:651px;top:1167px;width:21px;height:21px;background:#f8f8f8;"></div>
<div style="position:absolute;left:672px;top:1167px;width:21px;height:21px;background:#efefef;"></div>
<div style="position:absolute;left:693px;top:1167px;width:21px;height:21px;background:#ededed;"></div>
<div style="position:absolute;left:714px;top:1167px;width:21px;height:21px;background:#ffffff;"></div>
<div style="position:absolute;left:735px;top:1167px;width:7px;height:21px;background:#ffffff;"></div>
<div style="position:absolute;left:925px;top:1146px;width:20px;height:21px;background:#d8d8d8;"></div>
<div style="position:absolute;left:945px;top:1146px;width:21px;height:21px;background:#cbcbcb;"></div>
<div style="position:absolute;left:966px;top:1146px;width:21px;height:21px;background:#e2e2e2;"></div>
<div style="position:absolute;left:987px;top:1146px;width:21px;height:21px;background:#d5d5d5;"></div>
<div style="position:absolute;left:1008px;top:1146px;width:21px;height:21px;background:#dcdcdc;"></div>
<div style="position:absolute;left:1029px;top:1146px;width:21px;height:21px;background:#dcdcdc;"></div>
<div style="position:absolute;left:1050px;top:1146px;width:16px;height:21px;background:#d3d3d3;"></div>
<div style="position:absolute;left:925px;top:1167px;width:20px;height:21px;background:#ebebeb;"></div>
<div style="position:absolute;left:945px;top:1167px;width:21px;height:21px;background:#e6e6e6;"></div>
<div style="position:absolute;left:966px;top:1167px;width:21px;height:21px;background:#e3e3e3;"></div>
<div style="position:absolute;left:987px;top:1167px;width:21px;height:21px;background:#dfdfdf;"></div>
<div style="position:absolute;left:1008px;top:1167px;width:21px;height:21px;background:#eaeaea;"></div>
<div style="position:absolute;left:1029px;top:1167px;width:21px;height:21px;background:#eaeaea;"></div>
<div style="position:absolute;left:1050px;top:1167px;width:16px;height:21px;background:#e6e6e6;"></div>
<div style="position:absolute;left:2041px;top:1146px;width:17px;height:21px;background:#bfbfbf;"></div>
<div style="position:absolute;left:2058px;top:1146px;width:21px;height:21px;background:#bdbdbd;"></div>
<div style="position:absolute;left:2079px;top:1146px;width:21px;height:21px;background:#c0c0c0;"></div>
<div style="position:absolute;left:2100px;top:1146px;width:21px;height:21px;background:#c4c4c4;"></div>
<div style="position:absolute;left:2121px;top:1146px;width:21px;height:21px;background:#bdbdbd;"></div>
<div style="position:absolute;left:2142px;top:1146px;width:18px;height:21px;background:#cbcbcb;"></div>
<div style="position:absolute;left:2160px;top:1146px;width:21px;height:21px;background:#ffffff;"></div>
<div style="position:absolute;left:2041px;top:1167px;width:17px;height:21px;background:#f4f4f4;"></div>
<div style="position:absolute;left:2058px;top:1167px;width:21px;height:21px;background:#ececec;"></div>
<div style="position:absolute;left:2079px;top:1167px;width:21px;height:21px;background:#f2f2f2;"></div>
<div style="position:absolute;left:2100px;top:1167px;width:21px;height:21px;background:#f2f2f2;"></div>
<div style="position:absolute;left:2121px;top:1167px;width:21px;height:21px;background:#efefef;"></div>
<div style="position:absolute;left:2142px;top:1167px;width:18px;height:21px;background:#f0f0f0;"></div>
<div style="position:absolute;left:2160px;top:1167px;width:21px;height:21px;background:#f7f7f7;"></div>
<div style="position:absolute;left:621px;top:1209px;width:9px;height:21px;background:#fbfbfb;"></div>
<div style="position:absolute;left:630px;top:1209px;width:21px;height:21px;background:#ececec;"></div>
<div style="position:absolute;left:651px;top:1209px;width:21px;height:21px;background:#efefef;"></div>
<div style="position:absolute;left:672px;top:1209px;width:21px;height:21px;background:#f5f5f5;"></div>
<div style="position:absolute;left:693px;top:1209px;width:21px;height:21px;background:#ececec;"></div>
<div style="position:absolute;left:714px;top:1209px;width:21px;height:21px;background:#ffffff;"></div>
<div style="position:absolute;left:735px;top:1209px;width:7px;height:21px;background:#ffffff;"></div>
<div style="position:absolute;left:621px;top:1230px;width:9px;height:20px;background:#e3e3e3;"></div>
<div style="position:absolute;left:630px;top:1230px;width:21px;height:20px;background:#cbcbcb;"></div>
<div style="position:absolute;left:651px;top:1230px;width:21px;height:20px;background:#e0e0e0;"></div>
<div style="position:absolute;left:672px;top:1230px;width:21px;height:20px;background:#cfcfcf;"></div>
<div style="position:absolute;left:693px;top:1230px;width:21px;height:20px;background:#c1c1c1;"></div>
<div style="position:absolute;left:714px;top:1230px;width:21px;height:20px;background:#f1f1f1;"></div>
<div style="position:absolute;left:735px;top:1230px;width:7px;height:20px;background:#ffffff;"></div>
<div style="position:absolute;left:925px;top:1209px;width:20px;height:21px;background:#f5f5f5;"></div>
<div style="position:absolute;left:945px;top:1209px;width:21px;height:21px;background:#f1f1f1;"></div>
<div style="position:absolute;left:966px;top:1209px;width:21px;height:21px;background:#fdfdfd;"></div>
<div style="position:absolute;left:987px;top:1209px;width:21px;height:21px;background:#fdfdfd;"></div>
<div style="position:absolute;left:1008px;top:1209px;width:21px;height:21px;background:#f8f8f8;"></div>
<div style="position:absolute;left:1029px;top:1209px;width:21px;height:21px;background:#f8f8f8;"></div>
<div style="position:absolute;left:1050px;top:1209px;width:16px;height:21px;background:#efefef;"></div>
<div style="position:absolute;left:925px;top:1230px;width:20px;height:9px;background:#cdcdcd;"></div>
<div style="position:absolute;left:945px;top:1230px;width:21px;height:9px;background:#bdbdbd;"></div>
<div style="position:absolute;left:966px;top:1230px;width:21px;height:9px;background:#c6c6c6;"></div>
<div style="position:absolute;left:987px;top:1230px;width:21px;height:9px;background:#b5b5b5;"></div>
<div style="position:absolute;left:1008px;top:1230px;width:21px;height:9px;background:#d0d0d0;"></div>
<div style="position:absolute;left:1029px;top:1230px;width:21px;height:9px;background:#d0d0d0;"></div>
<div style="position:absolute;left:1050px;top:1230px;width:16px;height:9px;background:#cacaca;"></div>
<div style="position:absolute;left:2041px;top:1209px;width:17px;height:21px;background:#fdfdfd;"></div>
<div style="position:absolute;left:2058px;top:1209px;width:21px;height:21px;background:#f8f8f8;"></div>
<div style="position:absolute;left:2079px;top:1209px;width:21px;height:21px;background:#f3f3f3;"></div>
<div style="position:absolute;left:2100px;top:1209px;width:21px;height:21px;background:#f0f0f0;"></div>
<div style="position:absolute;left:2121px;top:1209px;width:21px;height:21px;background:#f6f6f6;"></div>
<div style="position:absolute;left:2142px;top:1209px;width:18px;height:21px;background:#ececec;"></div>
<div style="position:absolute;left:2160px;top:1209px;width:21px;height:21px;background:#fdfdfd;"></div>
<div style="position:absolute;left:2041px;top:1230px;width:17px;height:20px;background:#cdcdcd;"></div>
<div style="position:absolute;left:2058px;top:1230px;width:21px;height:20px;background:#c0c0c0;"></div>
<div style="position:absolute;left:2079px;top:1230px;width:21px;height:20px;background:#c2c2c2;"></div>
<div style="position:absolute;left:2100px;top:1230px;width:21px;height:20px;background:#c3c3c3;"></div>
<div style="position:absolute;left:2121px;top:1230px;width:21px;height:20px;background:#cccccc;"></div>
<div style="position:absolute;left:2142px;top:1230px;width:18px;height:20px;background:#d6d6d6;"></div>
<div style="position:absolute;left:2160px;top:1230px;width:21px;height:20px;background:#d8d8d8;"></div>
<div class="t" style="left:469.40px;top:1285.23px;font-size:23.0px;line-height:23.0px;font-weight:400;color:#000;letter-spacing:0.035px;-webkit-text-stroke:0.25px #000;">Строк на страницу:</div>
<div class="t" style="left:700.10px;top:1285.23px;font-size:23.0px;line-height:23.0px;font-weight:400;color:#000;letter-spacing:-0.1px;-webkit-text-stroke:0.25px #000;">15</div>
<div class="t" style="left:801.60px;top:1285.23px;font-size:23.0px;line-height:23.0px;font-weight:400;color:#000;letter-spacing:-0.036px;-webkit-text-stroke:0.25px #000;">1-15 из 1931</div>
<svg style="position:absolute;left:727.07px;top:1277.5px;" width="35.76" height="35.76" viewBox="0 0 24 24"><path fill="#757575" d="M7 10l5 5 5-5z"/></svg>
<svg style="position:absolute;left:987.6px;top:1277.1000000000001px;" width="37.2" height="37.2" viewBox="0 0 24 24"><path fill="#c4c4c4" d="M15.41 7.41L14 6l-6 6 6 6 1.41-1.41L10.83 12z"/></svg>
<svg style="position:absolute;left:1051.0855000000001px;top:1277.1000000000001px;" width="37.2" height="37.2" viewBox="0 0 24 24"><path fill="#000" d="M10 6L8.59 7.41 13.17 12l-4.58 4.59L10 18l6-6z"/></svg>
<svg style="position:absolute;left:0;top:0;overflow:visible" width="1" height="1"><defs><linearGradient id="ga1" x1="0" y1="329.2" x2="0" y2="349.6" gradientUnits="userSpaceOnUse"><stop offset="0" stop-color="#f20000"/><stop offset="1" stop-color="#cc0000"/></linearGradient></defs><path d="M2162 338.90000000000003 L2219 335.4 L2214.1 331.4 Q2212.7999999999997 329.4 2214.6 328.59999999999997 Q2215.7999999999997 328.3 2217.0 329.4 L2235.5 339.4 L2217.0 349.40000000000003 Q2215.7999999999997 350.5 2214.6 350.20000000000005 Q2212.7999999999997 349.40000000000003 2214.1 347.40000000000003 L2219 343.4 L2162 340.3 Z" fill="rgba(60,80,80,0.35)" transform="translate(0.6,1.2)"/><path d="M2162 338.90000000000003 L2219 335.4 L2214.1 331.4 Q2212.7999999999997 329.4 2214.6 328.59999999999997 Q2215.7999999999997 328.3 2217.0 329.4 L2235.5 339.4 L2217.0 349.40000000000003 Q2215.7999999999997 350.5 2214.6 350.20000000000005 Q2212.7999999999997 349.40000000000003 2214.1 347.40000000000003 L2219 343.4 L2162 340.3 Z" fill="url(#ga1)"/></svg>
<svg style="position:absolute;left:0;top:0;overflow:visible" width="1" height="1"><defs><linearGradient id="ga2" x1="0" y1="419.8" x2="0" y2="440.3" gradientUnits="userSpaceOnUse"><stop offset="0" stop-color="#f20000"/><stop offset="1" stop-color="#cc0000"/></linearGradient></defs><path d="M1869.8 430.0 L1948 425.95 L1943.3 422.0 Q1942.0 420.0 1943.8 419.2 Q1945.0 418.90000000000003 1946.2 420.0 L1963 430.2 L1946.2 440.1 Q1945.0 441.2 1943.8 440.90000000000003 Q1942.0 440.1 1943.3 438.1 L1948 434.45 L1869.8 431.4 Z" fill="rgba(60,80,80,0.35)" transform="translate(0.6,1.2)"/><path d="M1869.8 430.0 L1948 425.95 L1943.3 422.0 Q1942.0 420.0 1943.8 419.2 Q1945.0 418.90000000000003 1946.2 420.0 L1963 430.2 L1946.2 440.1 Q1945.0 441.2 1943.8 440.90000000000003 Q1942.0 440.1 1943.3 438.1 L1948 434.45 L1869.8 431.4 Z" fill="url(#ga2)"/></svg>
<div style="position:absolute;left:2310.8px;top:1267px;width:77px;height:77px;border-radius:50%;background:#333;box-shadow:0 3px 14px rgba(0,0,0,0.28)"></div>
<svg style="position:absolute;left:2320px;top:1276px;" width="58" height="58" viewBox="0 0 58 58"><path fill="#fff" d="M15.5 9.3 H43 q3.3 0 3.3 3.3 V48.4 L37 44.3 H15.5 q3.3 0-3.3 0 q-3.6 0-3.6-3.4 V12.6 q0-3.3 3.3-3.3 Z"/><path fill="none" stroke="#333" stroke-width="2.2" stroke-linecap="round" d="M18 35.5 Q28 41 40 35.5"/></svg>
<div style="position:absolute;left:2370px;top:1366px;width:50px;height:10px;overflow:hidden"><div style="position:absolute;right:0;bottom:0;width:12px;height:12px;background:#13202b;clip-path:path('M12 0 V12 H0 A12 12 0 0 0 12 0 Z')"></div></div>
</body></html>
